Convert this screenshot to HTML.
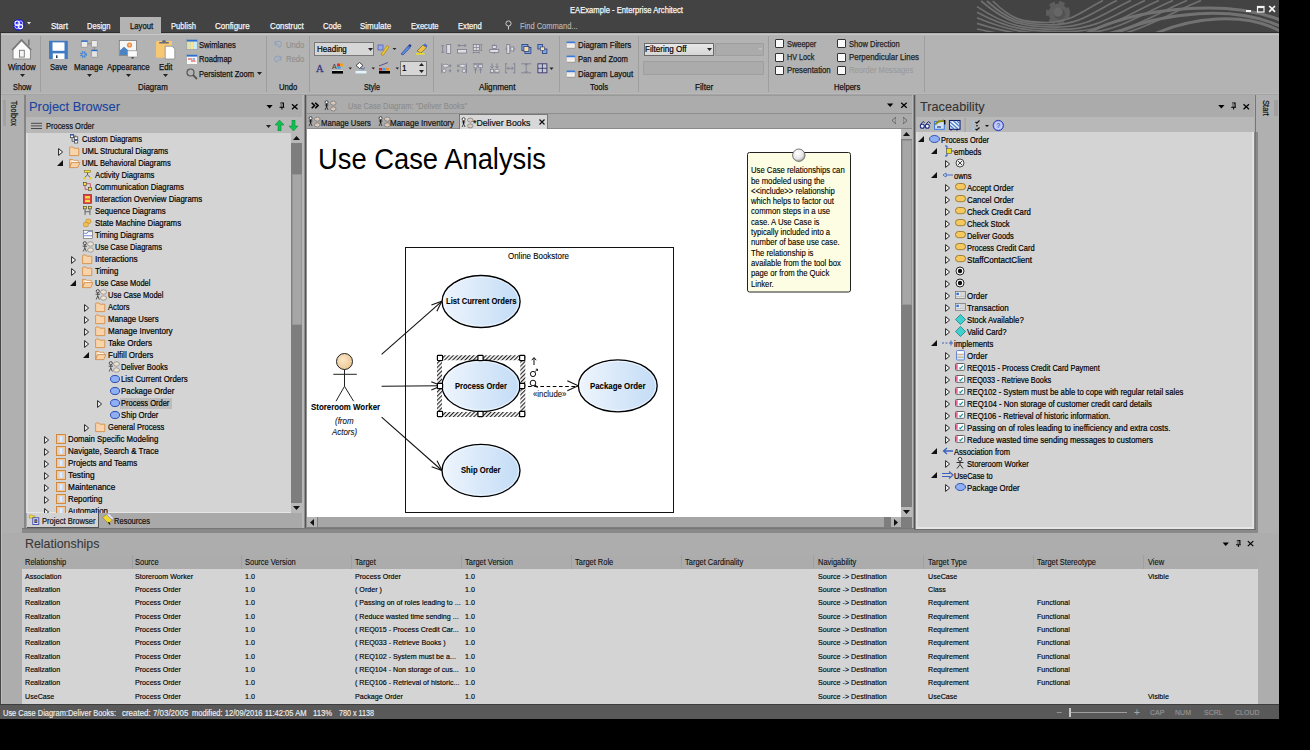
<!DOCTYPE html>
<html><head><meta charset="utf-8"><style>
html,body{margin:0;padding:0;}
body{width:1310px;height:750px;background:#000;position:relative;overflow:hidden;font-family:"Liberation Sans",sans-serif;}
div,svg{position:absolute;}
.t{white-space:nowrap;}
</style></head><body>
<div style="left:0px;top:0px;width:1279px;height:33px;background:#434343;"></div>
<svg style="left:0px;top:0px;" width="1310" height="40" viewBox="0 0 1310 40"><defs><clipPath id="tbc"><rect x="960" y="0" width="319" height="32"/></clipPath></defs><g clip-path="url(#tbc)"><circle cx="1058" cy="13" r="9.5" fill="#5e5e5e"/><circle cx="1058" cy="13" r="10.5" fill="none" stroke="#5e5e5e" stroke-width="3" stroke-dasharray="6,4"/><circle cx="1059.5" cy="14" r="5.8" fill="#525252"/><circle cx="1058" cy="12" r="4.5" fill="#666"/><path d="M992.7,1.0 C1011.4,19.3 1022.0,22.5 1046.0,22.5 C1071.7,22.5 1083.0,10.4 1103.0,0.5" stroke="#707070" stroke-width="1.7" fill="none"/><path d="M986.9,1.0 C1009.3,21.2 1022.2,24.8 1051.0,24.8 C1080.7,24.8 1093.9,11.4 1117.0,0.5" stroke="#707070" stroke-width="1.7" fill="none"/><path d="M981.1,1.0 C1007.3,23.2 1022.3,27.1 1056.0,27.1 C1089.8,27.1 1104.8,12.5 1131.0,0.5" stroke="#707070" stroke-width="1.7" fill="none"/><path d="M977.0,6.6 C1006.4,26.0 1023.2,29.4 1061.0,29.4 C1098.8,29.4 1115.6,13.5 1145.0,0.5" stroke="#707070" stroke-width="1.7" fill="none"/><path d="M977.0,12.2 C1008.1,28.8 1026.0,31.7 1066.0,31.7 C1107.8,31.7 1126.5,14.5 1159.0,0.5" stroke="#707070" stroke-width="1.7" fill="none"/><path d="M977.0,17.8 C1009.9,31.6 1028.7,34.0 1071.0,34.0 C1116.9,34.0 1137.3,15.6 1173.0,0.5" stroke="#707070" stroke-width="1.7" fill="none"/><path d="M977.0,23.4 C1011.6,34.4 1031.5,36.3 1076.0,36.3 C1126.0,36.3 1148.2,16.6 1187.0,0.5" stroke="#707070" stroke-width="1.7" fill="none"/><path d="M977.0,29.0 C1013.4,37.2 1034.2,38.6 1081.0,38.6 C1135.0,38.6 1159.0,17.6 1201.0,0.5" stroke="#707070" stroke-width="1.7" fill="none"/><path d="M1085,34 C1140,6 1232,-1 1282,21" stroke="#727272" stroke-width="3" fill="none"/><path d="M1112,35 C1162,11 1236,5 1282,27" stroke="#727272" stroke-width="3" fill="none"/><path d="M1150,36 C1190,17 1245,11 1282,32" stroke="#727272" stroke-width="3" fill="none"/></g></svg>
<div class="t" style="left:569.50px;top:5.68px;font-size:9px;line-height:9px;color:#f8f8f8;font-weight:normal;-webkit-text-stroke:0.25px #f8f8f8;transform:scaleX(0.8486);transform-origin:0 0;">EAExample - Enterprise Architect</div>
<div style="left:1245.5px;top:9.8px;width:5px;height:1.8px;background:#f4f4f4;"></div>
<svg style="left:0px;top:0px;" width="1310" height="40" viewBox="0 0 1310 40"><rect x="1257.5" y="6.5" width="6.5" height="5.5" fill="none" stroke="#f4f4f4" stroke-width="1.2"/><rect x="1257.5" y="6.5" width="6.5" height="1.6" fill="#f4f4f4"/><path d="M1269.2,6 L1275,11.8 M1275,6 L1269.2,11.8" stroke="#f6f6f6" stroke-width="1.7"/></svg>
<div style="left:120px;top:17px;width:41px;height:16px;background:#b3b3b3;"></div>
<svg style="left:13px;top:18.5px;" width="12" height="12" viewBox="0 0 12 12"><circle cx="5.8" cy="5.8" r="5.6" fill="#2a2af0" stroke="#1a1a90" stroke-width="0.5"/><circle cx="4.2" cy="4.2" r="2.2" fill="none" stroke="#fff" stroke-width="1.1"/><circle cx="7.4" cy="7.4" r="2.2" fill="none" stroke="#fff" stroke-width="1.1"/><circle cx="7.4" cy="4.2" r="2.2" fill="none" stroke="#e8e8ff" stroke-width="0.8"/><circle cx="4.2" cy="7.4" r="2.2" fill="none" stroke="#e8e8ff" stroke-width="0.8"/></svg>
<svg style="left:26.5px;top:22.3px;" width="4" height="3" viewBox="0 0 4 3"><path d="M0,0 H4 L2,2.5 Z" fill="#e8e8e8"/></svg>
<div class="t" style="left:51.00px;top:22.28px;font-size:9px;line-height:9px;color:#f6f6f6;font-weight:normal;-webkit-text-stroke:0.25px #f6f6f6;transform:scaleX(0.8945);transform-origin:0 0;">Start</div>
<div class="t" style="left:86.50px;top:22.28px;font-size:9px;line-height:9px;color:#f6f6f6;font-weight:normal;-webkit-text-stroke:0.25px #f6f6f6;transform:scaleX(0.8389);transform-origin:0 0;">Design</div>
<div class="t" style="left:129.50px;top:22.28px;font-size:9px;line-height:9px;color:#111;font-weight:normal;-webkit-text-stroke:0.25px #111;transform:scaleX(0.8549);transform-origin:0 0;">Layout</div>
<div class="t" style="left:171.00px;top:22.28px;font-size:9px;line-height:9px;color:#f6f6f6;font-weight:normal;-webkit-text-stroke:0.25px #f6f6f6;transform:scaleX(0.8470);transform-origin:0 0;">Publish</div>
<div class="t" style="left:215.20px;top:22.28px;font-size:9px;line-height:9px;color:#f6f6f6;font-weight:normal;-webkit-text-stroke:0.25px #f6f6f6;transform:scaleX(0.8867);transform-origin:0 0;">Configure</div>
<div class="t" style="left:269.70px;top:22.28px;font-size:9px;line-height:9px;color:#f6f6f6;font-weight:normal;-webkit-text-stroke:0.25px #f6f6f6;transform:scaleX(0.8725);transform-origin:0 0;">Construct</div>
<div class="t" style="left:322.50px;top:22.28px;font-size:9px;line-height:9px;color:#f6f6f6;font-weight:normal;-webkit-text-stroke:0.25px #f6f6f6;transform:scaleX(0.8506);transform-origin:0 0;">Code</div>
<div class="t" style="left:359.80px;top:22.28px;font-size:9px;line-height:9px;color:#f6f6f6;font-weight:normal;-webkit-text-stroke:0.25px #f6f6f6;transform:scaleX(0.8882);transform-origin:0 0;">Simulate</div>
<div class="t" style="left:410.90px;top:22.28px;font-size:9px;line-height:9px;color:#f6f6f6;font-weight:normal;-webkit-text-stroke:0.25px #f6f6f6;transform:scaleX(0.8457);transform-origin:0 0;">Execute</div>
<div class="t" style="left:458.00px;top:22.28px;font-size:9px;line-height:9px;color:#f6f6f6;font-weight:normal;-webkit-text-stroke:0.25px #f6f6f6;transform:scaleX(0.8495);transform-origin:0 0;">Extend</div>
<svg style="left:505px;top:20px;" width="7" height="10" viewBox="0 0 7 10"><circle cx="3.5" cy="3.5" r="2.6" stroke="#ccc" stroke-width="1" fill="none"/><path d="M3.5,6 V9.5" stroke="#ccc"/></svg>
<div class="t" style="left:520.00px;top:22.28px;font-size:9px;line-height:9px;color:#bdbdbd;font-weight:normal;-webkit-text-stroke:0.1px #bdbdbd;transform:scaleX(0.8345);transform-origin:0 0;">Find Command...</div>
<div style="left:0px;top:33px;width:1279px;height:62px;background:#b3b3b3;"></div>
<div style="left:0px;top:32px;width:1279px;height:1px;background:#2e2e2e;"></div>
<div style="left:120px;top:32px;width:41px;height:1px;background:#b3b3b3;"></div>
<div style="left:1px;top:33.5px;width:1278px;height:1px;background:#c6c6c6;"></div>
<div style="left:0px;top:93px;width:1279px;height:1px;background:#b9b9b9;"></div>
<div style="left:0px;top:94px;width:1279px;height:1px;background:#a4a4a4;"></div>
<div style="left:40px;top:36px;width:1px;height:56px;background:#9e9e9e;"></div>
<div style="left:266px;top:36px;width:1px;height:56px;background:#9e9e9e;"></div>
<div style="left:309px;top:36px;width:1px;height:56px;background:#9e9e9e;"></div>
<div style="left:433px;top:36px;width:1px;height:56px;background:#9e9e9e;"></div>
<div style="left:559px;top:36px;width:1px;height:56px;background:#9e9e9e;"></div>
<div style="left:638px;top:36px;width:1px;height:56px;background:#9e9e9e;"></div>
<div style="left:768px;top:36px;width:1px;height:56px;background:#9e9e9e;"></div>
<div style="left:924px;top:36px;width:1px;height:56px;background:#9e9e9e;"></div>
<div class="t" style="left:12.70px;top:83.48px;font-size:9px;line-height:9px;color:#111;font-weight:normal;-webkit-text-stroke:0.25px #111;transform:scaleX(0.8129);transform-origin:0 0;">Show</div>
<div class="t" style="left:138.20px;top:83.48px;font-size:9px;line-height:9px;color:#111;font-weight:normal;-webkit-text-stroke:0.25px #111;transform:scaleX(0.8763);transform-origin:0 0;">Diagram</div>
<div class="t" style="left:278.60px;top:83.48px;font-size:9px;line-height:9px;color:#111;font-weight:normal;-webkit-text-stroke:0.25px #111;transform:scaleX(0.8552);transform-origin:0 0;">Undo</div>
<div class="t" style="left:363.50px;top:83.48px;font-size:9px;line-height:9px;color:#111;font-weight:normal;-webkit-text-stroke:0.25px #111;transform:scaleX(0.7947);transform-origin:0 0;">Style</div>
<div class="t" style="left:478.50px;top:83.48px;font-size:9px;line-height:9px;color:#111;font-weight:normal;-webkit-text-stroke:0.25px #111;transform:scaleX(0.9096);transform-origin:0 0;">Alignment</div>
<div class="t" style="left:590.10px;top:83.48px;font-size:9px;line-height:9px;color:#111;font-weight:normal;-webkit-text-stroke:0.25px #111;transform:scaleX(0.8663);transform-origin:0 0;">Tools</div>
<div class="t" style="left:694.70px;top:83.48px;font-size:9px;line-height:9px;color:#111;font-weight:normal;-webkit-text-stroke:0.25px #111;transform:scaleX(0.9101);transform-origin:0 0;">Filter</div>
<div class="t" style="left:833.80px;top:83.48px;font-size:9px;line-height:9px;color:#111;font-weight:normal;-webkit-text-stroke:0.25px #111;transform:scaleX(0.8449);transform-origin:0 0;">Helpers</div>
<div class="t" style="left:8.40px;top:62.78px;font-size:9px;line-height:9px;color:#111;font-weight:normal;-webkit-text-stroke:0.25px #111;transform:scaleX(0.8623);transform-origin:0 0;">Window</div>
<svg style="left:20px;top:74px;" width="5" height="3" viewBox="0 0 5 3"><path d="M0,0 H5 L2.5,3 Z" fill="#222"/></svg>
<div class="t" style="left:49.50px;top:62.78px;font-size:9px;line-height:9px;color:#111;font-weight:normal;-webkit-text-stroke:0.25px #111;transform:scaleX(0.8434);transform-origin:0 0;">Save</div>
<div class="t" style="left:73.70px;top:62.78px;font-size:9px;line-height:9px;color:#111;font-weight:normal;-webkit-text-stroke:0.25px #111;transform:scaleX(0.8887);transform-origin:0 0;">Manage</div>
<svg style="left:86.5px;top:74px;" width="5" height="3" viewBox="0 0 5 3"><path d="M0,0 H5 L2.5,3 Z" fill="#222"/></svg>
<div class="t" style="left:106.60px;top:62.78px;font-size:9px;line-height:9px;color:#111;font-weight:normal;-webkit-text-stroke:0.25px #111;transform:scaleX(0.8798);transform-origin:0 0;">Appearance</div>
<svg style="left:126px;top:74px;" width="5" height="3" viewBox="0 0 5 3"><path d="M0,0 H5 L2.5,3 Z" fill="#222"/></svg>
<div class="t" style="left:158.80px;top:62.78px;font-size:9px;line-height:9px;color:#111;font-weight:normal;-webkit-text-stroke:0.25px #111;transform:scaleX(0.8641);transform-origin:0 0;">Edit</div>
<svg style="left:163px;top:74px;" width="5" height="3" viewBox="0 0 5 3"><path d="M0,0 H5 L2.5,3 Z" fill="#222"/></svg>
<svg style="left:0px;top:0px;" width="1310" height="100" viewBox="0 0 1310 100"><path d="M13,59 V49.5 L21.5,40.5 L30.5,49.5 V59 Z" fill="#fbfbfb" stroke="#8a8a8a" stroke-width="1.1" stroke-linejoin="round"/><path d="M12,50 L21.5,39.8 L31.3,50" stroke="#787878" stroke-width="1.4" fill="none"/><rect x="28" y="39.5" width="1.6" height="6" fill="#7a7a7a"/><rect x="19.5" y="50.3" width="4.8" height="6.8" fill="#f4f4f4" stroke="#777" stroke-width="0.9"/></svg>
<svg style="left:0px;top:0px;" width="1310" height="100" viewBox="0 0 1310 100"><rect x="49" y="40.8" width="18.8" height="18.2" fill="#3f7bc4"/><rect x="52.5" y="42.4" width="12" height="8.4" fill="#fff"/><rect x="52.8" y="53.4" width="11.7" height="5.6" fill="#fff"/><rect x="56" y="55.3" width="1.5" height="2.8" fill="#2a3a4a"/></svg>
<svg style="left:0px;top:0px;" width="1310" height="100" viewBox="0 0 1310 100"><rect x="81.3" y="40.5" width="6.3" height="6.8" rx="0.6" fill="#eaeaea" stroke="#8a8a8a" stroke-width="0.7"/><rect x="81.3" y="40.5" width="6.3" height="1.4" fill="#2a6ed0"/><rect x="91.4" y="40.5" width="6" height="6.5" rx="0.6" fill="#eaeaea" stroke="#8a8a8a" stroke-width="0.7"/><rect x="91.4" y="49.8" width="6" height="7.5" rx="0.6" fill="#e4e4e4" stroke="#8a8a8a" stroke-width="0.7"/><rect x="91.4" y="49.8" width="6" height="1.4" fill="#2a6ed0"/><path d="M87.6,43.8 H91.4 M94.4,47 V49.8" stroke="#777" stroke-width="0.7"/><circle cx="83.5" cy="54.5" r="2.6" fill="none" stroke="#3a80d0" stroke-width="1.6" stroke-dasharray="1.2,0.9"/><circle cx="83.5" cy="54.5" r="1.6" fill="none" stroke="#3a80d0" stroke-width="0.8"/></svg>
<svg style="left:0px;top:0px;" width="1310" height="100" viewBox="0 0 1310 100"><rect x="119.3" y="40.4" width="17.2" height="15" fill="#f6f6f6" stroke="#7a7a7a" stroke-width="0.8"/><path d="M119.7,55 V50.5 L124,46.8 L128.5,50.5 V55 Z" fill="#4a84c4"/><circle cx="129.5" cy="45" r="2.6" fill="#f08a40"/><path d="M128.2,45 H130.8 M129.5,43.7 V46.3" stroke="#fff" stroke-width="0.5"/><rect x="127.6" y="50.7" width="9.8" height="6.3" rx="0.6" fill="#fafafa" stroke="#8a8a8a" stroke-width="0.7"/><rect x="131.6" y="57" width="2" height="1.6" fill="#444"/></svg>
<svg style="left:0px;top:0px;" width="1310" height="100" viewBox="0 0 1310 100"><rect x="156" y="41" width="16" height="16.8" rx="1" fill="#f6c874"/><path d="M159.2,43.6 H168.8 V42 H166 A2,2 0 0 0 162,42 H159.2 Z" fill="#6a6a7a"/><path d="M165.2,46.2 H172 L174.8,49 V59 H165.2 Z" fill="#fff" stroke="#8a8a8a" stroke-width="0.8" stroke-linejoin="round"/></svg>
<svg style="left:186px;top:38.5px;" width="12" height="11" viewBox="0 0 12 11"><rect x="0.5" y="0.5" width="11" height="10" fill="#d0d0d0" stroke="#9a9a9a" stroke-width="0.6"/><rect x="0.8" y="0.8" width="10.4" height="1.8" fill="#2a6ed0"/><rect x="1.3" y="2.8" width="2.8" height="7.2" fill="#d4e8a8"/><rect x="4.6" y="2.8" width="2.8" height="7.2" fill="#ffe290"/><rect x="7.9" y="2.8" width="2.8" height="7.2" fill="#bff0ff"/></svg>
<svg style="left:186px;top:53.5px;" width="12" height="11" viewBox="0 0 12 11"><rect x="0.5" y="0.5" width="11" height="10" fill="#f8f8f8" stroke="#9a9a9a" stroke-width="0.6"/><rect x="0.8" y="0.8" width="10.4" height="1.8" fill="#2a6ed0"/><path d="M2,5 H6 M5,7 H9.5" stroke="#e03030" stroke-width="1.1"/><path d="M6.5,5 H9" stroke="#3a6ad0" stroke-width="1"/></svg>
<svg style="left:186px;top:68px;" width="12" height="12" viewBox="0 0 12 12"><circle cx="4.5" cy="4.5" r="3.5" stroke="#555" stroke-width="1.2" fill="none"/><path d="M7,7 L11,11" stroke="#555" stroke-width="1.8"/></svg>
<div class="t" style="left:199.40px;top:40.88px;font-size:9px;line-height:9px;color:#111;font-weight:normal;-webkit-text-stroke:0.25px #111;transform:scaleX(0.8457);transform-origin:0 0;">Swimlanes</div>
<div class="t" style="left:199.40px;top:55.38px;font-size:9px;line-height:9px;color:#111;font-weight:normal;-webkit-text-stroke:0.25px #111;transform:scaleX(0.8406);transform-origin:0 0;">Roadmap</div>
<div class="t" style="left:199.40px;top:69.98px;font-size:9px;line-height:9px;color:#111;font-weight:normal;-webkit-text-stroke:0.25px #111;transform:scaleX(0.8395);transform-origin:0 0;">Persistent Zoom</div>
<svg style="left:257px;top:72px;" width="5" height="3" viewBox="0 0 5 3"><path d="M0,0 H5 L2.5,3 Z" fill="#222"/></svg>
<svg style="left:274px;top:40px;" width="8" height="8" viewBox="0 0 8 8"><path d="M1,1 V5 H5 M1.5,4.5 A3,3 0 1 1 4,7" stroke="#8aa0c0" fill="none"/></svg>
<svg style="left:274px;top:55px;" width="8" height="8" viewBox="0 0 8 8"><path d="M7,1 V5 H3 M6.5,4.5 A3,3 0 1 0 4,7" stroke="#8aa0c0" fill="none"/></svg>
<div class="t" style="left:285.60px;top:40.78px;font-size:9px;line-height:9px;color:#8e8e8e;font-weight:normal;-webkit-text-stroke:0.1px #8e8e8e;transform:scaleX(0.8552);transform-origin:0 0;">Undo</div>
<div class="t" style="left:285.60px;top:55.38px;font-size:9px;line-height:9px;color:#8e8e8e;font-weight:normal;-webkit-text-stroke:0.1px #8e8e8e;transform:scaleX(0.8552);transform-origin:0 0;">Redo</div>
<div style="left:314px;top:42px;width:60px;height:14px;background:#d6d6d6;border:1px solid #7a7a7a;box-sizing:border-box"></div>
<div class="t" style="left:316.50px;top:45.28px;font-size:9px;line-height:9px;color:#000;font-weight:normal;-webkit-text-stroke:0.2px #000;transform:scaleX(0.8889);transform-origin:0 0;">Heading</div>
<svg style="left:368px;top:48px;" width="5" height="3" viewBox="0 0 5 3"><path d="M0,0 H5 L2.5,3 Z" fill="#222"/></svg>
<div style="left:400px;top:61px;width:27px;height:15px;background:#d6d6d6;border:1px solid #7a7a7a;box-sizing:border-box"></div>
<div class="t" style="left:402.00px;top:64.48px;font-size:9px;line-height:9px;color:#000;font-weight:normal;-webkit-text-stroke:0.2px #000;transform:scaleX(0.9000);transform-origin:0 0;">1</div>
<svg style="left:419px;top:63px;" width="5" height="10" viewBox="0 0 5 10"><path d="M0,3 L2.5,0 L5,3 Z M0,7 H5 L2.5,10 Z" fill="#222"/></svg>
<svg style="left:0px;top:0px;" width="1310" height="100" viewBox="0 0 1310 100"><rect x="378" y="45" width="5" height="5" fill="#9aa8e8" stroke="#4a5ab0" stroke-width="0.7"/><path d="M381,54.5 L387,45.5 L389,47 L383,55.5 Z" fill="#f0c830" stroke="#9a7a10" stroke-width="0.6"/><path d="M392.5,48 H396.5 L394.5,50 Z" fill="#222"/><path d="M401,54 L408,46 L410,48 L403,55 Z" fill="#5a8ae0" stroke="#2a3a90" stroke-width="0.6"/><path d="M408,45.5 L410,44 L411.5,45.5 L410.5,47.5 Z" fill="#2a3a90"/><path d="M417,51 L423,45 L426.5,47.5 L421,53 Z" fill="#f0c040" stroke="#6a5a20" stroke-width="0.6"/><path d="M423,45 L425,43.5 L427.5,45.5 L426.5,47.5 Z" fill="#4a6ad0"/><rect x="416" y="53" width="8.5" height="1.6" fill="#e8e020"/></svg>
<svg style="left:0px;top:0px;" width="1310" height="100" viewBox="0 0 1310 100"><text x="316" y="71.8" font-family="Liberation Serif" font-size="10.5" fill="#3a3a80" stroke="#3a3a80" stroke-width="0.3">A</text><text x="332" y="69" font-family="Liberation Sans" font-size="7" fill="#333">A</text><rect x="337" y="63.5" width="3" height="3" fill="#e83030"/><rect x="340" y="63.5" width="3" height="3" fill="#f0a020"/><rect x="337.5" y="66.3" width="3" height="2.5" fill="#30a0f0"/><rect x="332" y="71" width="11" height="2.6" fill="#000"/><rect x="332" y="70.3" width="11" height="0.7" fill="#e8e8e8"/><path d="M348.5,67.5 H352 L350.25,69.5 Z M371.5,67.5 H375 L373.25,69.5 Z M395.5,67.5 H399 L397.25,69.5 Z" fill="#222"/><path d="M356,65.5 L359.5,62.5 L363,65.5 L359.5,68.5 Z" fill="#fff" stroke="#222" stroke-width="0.8"/><path d="M360.5,68.5 Q364,70 365,67.5" stroke="#3a5ab0" stroke-width="0.9" fill="none"/><rect x="355.5" y="71" width="11" height="2.4" fill="#e4f4fc"/><path d="M379,66 L388,62.5" stroke="#3a3a90" stroke-width="0.8"/><rect x="379" y="68" width="3.2" height="2.6" fill="#e82020"/><rect x="382.5" y="68" width="3.2" height="2.6" fill="#40a0f0"/><rect x="386" y="68" width="3.2" height="2.6" fill="#f09020"/><rect x="379" y="71" width="11" height="2.6" fill="#000"/></svg>
<svg style="left:0px;top:0px;" width="1310" height="100" viewBox="0 0 1310 100"><g transform="translate(441.2,44)"><path d="M1.5,1 V9 M0,2.5 L1.5,1 L3,2.5 M0,7.5 L1.5,9 L3,7.5" stroke="#7a7a90" fill="none" stroke-width="0.8"/><rect x="5.5" y="0.5" width="4" height="9" fill="#dedede" stroke="#7a7a90" stroke-width="0.8"/></g><g transform="translate(457,44)"><path d="M1,1.5 H9 M2.5,0 L1,1.5 L2.5,3 M7.5,0 L9,1.5 L7.5,3" stroke="#7a7a90" fill="none" stroke-width="0.8"/><rect x="0.5" y="5.5" width="9" height="3.5" fill="#dedede" stroke="#7a7a90" stroke-width="0.8"/></g><g transform="translate(472.8,44)"><rect x="0.5" y="0.5" width="6" height="6" fill="#dedede" stroke="#7a7a90" stroke-width="0.8"/><path d="M3.5,0.5 V6.5 M0.5,3.5 H6.5 M8.5,0.5 V6.5 M7.5,0.5 H9.5 M7.5,6.5 H9.5 M0.5,8.5 H6.5 M0.5,7.5 V9.5 M6.5,7.5 V9.5" stroke="#7a7a90" fill="none" stroke-width="0.7"/></g><g transform="translate(489.3,44)"><rect x="3" y="1.5" width="4" height="3" fill="#dedede" stroke="#7a7a90" stroke-width="0.8"/><rect x="0.5" y="5.5" width="9" height="3" fill="#dedede" stroke="#7a7a90" stroke-width="0.8"/><path d="M5,0 V1.5 M5,8.5 V10" stroke="#7a7a90" stroke-width="0.8"/></g><g transform="translate(505.3,44)"><rect x="1.5" y="0.5" width="3" height="9" fill="#dedede" stroke="#7a7a90" stroke-width="0.8"/><rect x="5.5" y="3" width="3" height="4" fill="#dedede" stroke="#7a7a90" stroke-width="0.8"/><path d="M0,5 H1.5 M8.5,5 H10" stroke="#7a7a90" stroke-width="0.8"/></g><g transform="translate(521.4,44)"><rect x="0.5" y="0.5" width="6" height="6" fill="#7aaae0" stroke="#2a3a80" stroke-width="0.8"/><rect x="3.5" y="3.5" width="6" height="6" fill="#7aaae0" stroke="#2a3a80" stroke-width="0.8"/><rect x="2.5" y="2.5" width="5" height="5" fill="#f6dca0" stroke="#2a3a80" stroke-width="0.8"/></g><g transform="translate(537.4,44)"><rect x="0.5" y="0.5" width="4.5" height="4.5" fill="#7aaae0" stroke="#2a3a80" stroke-width="0.8"/><rect x="5" y="5" width="4.5" height="4.5" fill="#7aaae0" stroke="#2a3a80" stroke-width="0.8"/><rect x="3" y="3" width="4" height="3.5" fill="#f6e8a0" stroke="#2a3a80" stroke-width="0.6"/></g><g transform="translate(441.2,63.3)"><path d="M0.5,0 V10 M9,1 V4 M9,6 V9 M7.5,2.5 H10 M7.5,7.5 H10" stroke="#7a7a90" stroke-width="0.8" fill="none"/><ellipse cx="4.5" cy="2.5" rx="3" ry="1.6" fill="#dedede" stroke="#7a7a90" stroke-width="0.7"/><ellipse cx="3" cy="7.5" rx="1.8" ry="1.8" fill="#dedede" stroke="#7a7a90" stroke-width="0.7"/></g><g transform="translate(457,63.3)"><path d="M9.5,0 V10 M1,1 V4 M1,6 V9 M0,2.5 H2.5 M0,7.5 H2.5" stroke="#7a7a90" stroke-width="0.8" fill="none"/><ellipse cx="5.5" cy="2.5" rx="3" ry="1.6" fill="#dedede" stroke="#7a7a90" stroke-width="0.7"/><ellipse cx="7" cy="7.5" rx="1.8" ry="1.8" fill="#dedede" stroke="#7a7a90" stroke-width="0.7"/></g><g transform="translate(473,63.3)"><path d="M0,0.5 H10 M2.5,5 V10 M7.5,5 V10 M1,7 L2.5,5.5 L4,7 M6,7 L7.5,5.5 L9,7" stroke="#7a7a90" stroke-width="0.8" fill="none"/><rect x="1" y="1.5" width="3" height="3" fill="#dedede" stroke="#7a7a90" stroke-width="0.7"/><rect x="5.5" y="1.5" width="4" height="2.5" fill="#dedede" stroke="#7a7a90" stroke-width="0.7"/></g><g transform="translate(489.5,63.3)"><path d="M0,9.5 H10 M2.5,0 V5 M7.5,0 V5 M1,3 L2.5,4.5 L4,3 M6,3 L7.5,4.5 L9,3" stroke="#7a7a90" stroke-width="0.8" fill="none"/><rect x="1" y="6" width="3" height="3" fill="#dedede" stroke="#7a7a90" stroke-width="0.7"/><ellipse cx="7.5" cy="7.5" rx="2.5" ry="1.5" fill="#dedede" stroke="#7a7a90" stroke-width="0.7"/></g><g transform="translate(505.2,63.3)"><path d="M0.5,0 V10 M9.5,0 V10 M0.5,0.5 H2 M0.5,9.5 H2 M9.5,0.5 H8 M9.5,9.5 H8 M2,5 H8 M3.5,3.5 L2,5 L3.5,6.5 M6.5,3.5 L8,5 L6.5,6.5" stroke="#7a7a90" stroke-width="0.8" fill="none"/></g><g transform="translate(521.2,63.3)"><path d="M0,0.5 H10 M0,9.5 H10 M5,0.5 V9.5 M3.5,2 L5,0.5 L6.5,2 M3.5,8 L5,9.5 L6.5,8" stroke="#7a7a90" stroke-width="0.8" fill="none"/></g><g transform="translate(537.4,63.3)"><rect x="0.5" y="0.5" width="9" height="9" fill="#c8c8d0" stroke="#3a3a70" stroke-width="0.9"/><path d="M5,0.5 V9.5 M0.5,5 H9.5" stroke="#3a3a70" stroke-width="0.9"/></g><path d="M549.5,67.5 H553.5 L551.5,70 Z" fill="#222"/></svg>
<svg style="left:566px;top:40.599999999999994px;" width="10" height="8" viewBox="0 0 10 8"><rect x="1" y="1" width="8.5" height="6.8" rx="0.8" fill="#8a8a8a" opacity="0.6"/><rect x="0.5" y="0.5" width="8.5" height="6.5" rx="0.8" fill="#f6f2ee" stroke="#a0a0a0" stroke-width="0.5"/><rect x="0.5" y="0.5" width="8.5" height="1.8" rx="0.5" fill="#3a7ad8"/><path d="M1,4 H9" stroke="#e0d8d0" stroke-width="0.6"/></svg>
<div class="t" style="left:577.90px;top:40.78px;font-size:9px;line-height:9px;color:#111;font-weight:normal;-webkit-text-stroke:0.25px #111;transform:scaleX(0.8720);transform-origin:0 0;">Diagram Filters</div>
<svg style="left:566px;top:55.099999999999994px;" width="10" height="8" viewBox="0 0 10 8"><rect x="1" y="1" width="8.5" height="6.8" rx="0.8" fill="#8a8a8a" opacity="0.6"/><rect x="0.5" y="0.5" width="8.5" height="6.5" rx="0.8" fill="#f6f2ee" stroke="#a0a0a0" stroke-width="0.5"/><rect x="0.5" y="0.5" width="8.5" height="1.8" rx="0.5" fill="#3a7ad8"/><path d="M1,4 H9" stroke="#e0d8d0" stroke-width="0.6"/></svg>
<div class="t" style="left:577.90px;top:55.28px;font-size:9px;line-height:9px;color:#111;font-weight:normal;-webkit-text-stroke:0.25px #111;transform:scaleX(0.8453);transform-origin:0 0;">Pan and Zoom</div>
<svg style="left:566px;top:69.8px;" width="10" height="8" viewBox="0 0 10 8"><rect x="1" y="1" width="8.5" height="6.8" rx="0.8" fill="#8a8a8a" opacity="0.6"/><rect x="0.5" y="0.5" width="8.5" height="6.5" rx="0.8" fill="#f6f2ee" stroke="#a0a0a0" stroke-width="0.5"/><rect x="0.5" y="0.5" width="8.5" height="1.8" rx="0.5" fill="#3a7ad8"/><path d="M1,4 H9" stroke="#e0d8d0" stroke-width="0.6"/></svg>
<div class="t" style="left:577.90px;top:69.98px;font-size:9px;line-height:9px;color:#111;font-weight:normal;-webkit-text-stroke:0.25px #111;transform:scaleX(0.8673);transform-origin:0 0;">Diagram Layout</div>
<div style="left:643.5px;top:42.5px;width:70px;height:13.5px;background:linear-gradient(#e8e8e8,#d6d6d6);border:1px solid #6a6a6a;box-sizing:border-box"></div>
<div class="t" style="left:645.40px;top:45.18px;font-size:9px;line-height:9px;color:#000;font-weight:normal;-webkit-text-stroke:0.2px #000;transform:scaleX(0.8976);transform-origin:0 0;">Filtering Off</div>
<svg style="left:707px;top:48px;" width="5" height="3" viewBox="0 0 5 3"><path d="M0,0 H5 L2.5,3 Z" fill="#222"/></svg>
<div style="left:715px;top:42.5px;width:49px;height:13.5px;background:#ababab;border:1px solid #9e9e9e;box-sizing:border-box;border-radius:1px"></div>
<div style="left:643px;top:61px;width:121px;height:14px;background:#ababab;border:1px solid #9e9e9e;box-sizing:border-box;border-radius:1px"></div>
<svg style="left:758px;top:48px;" width="5" height="3" viewBox="0 0 5 3"><path d="M0,0 H4.5 L2.25,2.5 Z" fill="#c0c0c0"/></svg>
<div style="left:775px;top:39.300000000000004px;width:9px;height:9px;background:#fafafa;border:1px solid #333;box-sizing:border-box;border-radius:1px"></div>
<div class="t" style="left:787.00px;top:40.08px;font-size:9px;line-height:9px;color:#222;font-weight:normal;-webkit-text-stroke:0.25px #222;transform:scaleX(0.8249);transform-origin:0 0;">Sweeper</div>
<div style="left:775px;top:52.7px;width:9px;height:9px;background:#fafafa;border:1px solid #333;box-sizing:border-box;border-radius:1px"></div>
<div class="t" style="left:787.00px;top:53.48px;font-size:9px;line-height:9px;color:#222;font-weight:normal;-webkit-text-stroke:0.25px #222;transform:scaleX(0.8026);transform-origin:0 0;">HV Lock</div>
<div style="left:775px;top:65.7px;width:9px;height:9px;background:#fafafa;border:1px solid #333;box-sizing:border-box;border-radius:1px"></div>
<div class="t" style="left:787.00px;top:66.48px;font-size:9px;line-height:9px;color:#222;font-weight:normal;-webkit-text-stroke:0.25px #222;transform:scaleX(0.8648);transform-origin:0 0;">Presentation</div>
<div style="left:837px;top:39.300000000000004px;width:9px;height:9px;background:#fafafa;border:1px solid #333;box-sizing:border-box;border-radius:1px"></div>
<div class="t" style="left:849.00px;top:40.08px;font-size:9px;line-height:9px;color:#222;font-weight:normal;-webkit-text-stroke:0.25px #222;transform:scaleX(0.8377);transform-origin:0 0;">Show Direction</div>
<div style="left:837px;top:52.7px;width:9px;height:9px;background:#fafafa;border:1px solid #333;box-sizing:border-box;border-radius:1px"></div>
<div class="t" style="left:849.00px;top:53.48px;font-size:9px;line-height:9px;color:#222;font-weight:normal;-webkit-text-stroke:0.25px #222;transform:scaleX(0.8800);transform-origin:0 0;">Perpendicular Lines</div>
<div style="left:837px;top:65.7px;width:9px;height:9px;background:#fafafa;border:1px solid #333;box-sizing:border-box;border-radius:1px"></div>
<div class="t" style="left:849.00px;top:66.48px;font-size:9px;line-height:9px;color:#999;font-weight:normal;-webkit-text-stroke:0.05px #999;transform:scaleX(0.8444);transform-origin:0 0;">Reorder Messages</div>
<div style="left:0px;top:95px;width:1279px;height:609px;background:#b0b0b0;"></div>
<div style="left:0px;top:33px;width:1px;height:686px;background:#474747;"></div>
<div style="left:1px;top:95px;width:1px;height:609px;background:#bcbcbc;"></div>
<div style="left:2.5px;top:100px;width:3.5px;height:26px;background:#a2a2a2;"></div>
<svg style="left:0px;top:95px;overflow:visible" width="24" height="40" viewBox="0 0 24 40"><text transform="translate(10.6,5.8) rotate(90)" font-family="Liberation Sans" font-size="9" textLength="25" lengthAdjust="spacingAndGlyphs" fill="#111" stroke="#111" stroke-width="0.2">Toolbox</text></svg>
<div style="left:24px;top:95px;width:2px;height:434px;background:#858585;"></div>
<div style="left:26px;top:95px;width:276px;height:22px;background:#ababab;"></div>
<div class="t" style="left:29.40px;top:99.82px;font-size:13.5px;line-height:13.5px;color:#1844a0;font-weight:normal;-webkit-text-stroke:0.1px #1844a0;transform:scaleX(0.9551);transform-origin:0 0;">Project Browser</div>
<svg style="left:0px;top:0px;" width="1310" height="750" viewBox="0 0 1310 750"><path d="M266.4,105 H272.7 L269.54999999999995,108.5 Z" fill="#000"/></svg>
<svg style="left:0px;top:0px;" width="1310" height="750" viewBox="0 0 1310 750"><path d="M280.4,103.1 H283.4 V107.1" stroke="#000" stroke-width="1.1" fill="none"/><rect x="280.4" y="103.1" width="2" height="4" fill="#777"/><path d="M279.5,107.3 H284.3 M281.9,107.3 V109.5" stroke="#000" stroke-width="1"/></svg>
<svg style="left:0px;top:0px;" width="1310" height="750" viewBox="0 0 1310 750"><path d="M292,104.2 L297.5,109.2 M297.5,104.2 L292,109.2" stroke="#000" stroke-width="1.25"/></svg>
<div style="left:26px;top:117px;width:276px;height:16px;background:#b8b8b8;"></div>
<svg style="left:31px;top:122px;" width="11" height="8" viewBox="0 0 11 8"><path d="M0,1.3 H11 M0,3.9 H11 M0,6.5 H11" stroke="#4a4a4a" stroke-width="1"/></svg>
<div class="t" style="left:45.80px;top:121.98px;font-size:9px;line-height:9px;color:#111;font-weight:normal;-webkit-text-stroke:0.2px #111;transform:scaleX(0.8308);transform-origin:0 0;">Process Order</div>
<svg style="left:266px;top:125px;" width="5" height="3" viewBox="0 0 5 3"><path d="M0,0 H5 L2.5,3 Z" fill="#222"/></svg>
<svg style="left:275px;top:120px;" width="9" height="11" viewBox="0 0 9 11"><path d="M4.5,0 L9,5 H6 V11 H3 V5 H0 Z" fill="#10c050" stroke="#0a7a30" stroke-width="0.5"/></svg>
<svg style="left:289px;top:120px;" width="9" height="11" viewBox="0 0 9 11"><path d="M4.5,11 L9,6 H6 V0 H3 V6 H0 Z" fill="#10c050" stroke="#0a7a30" stroke-width="0.5"/></svg>
<div style="left:26px;top:133px;width:265px;height:380px;background:#d4d4d4;border-left:2px solid #dedede;border-bottom:1px solid #e6e6e6;box-sizing:border-box"></div>
<div style="left:291px;top:133px;width:11px;height:370px;background:#7e7e7e;"></div>
<div style="left:291.5px;top:174px;width:10px;height:151px;background:#a6a6a6;border:1px solid #969696;box-sizing:border-box"></div>
<div style="left:291px;top:133px;width:11px;height:10px;background:#b8b8b8;"></div>
<div style="left:291px;top:503px;width:11px;height:10px;background:#b8b8b8;"></div>
<svg style="left:293px;top:136px;" width="7" height="4" viewBox="0 0 7 4"><path d="M0,4 L3.5,0 L7,4 Z" fill="#111"/></svg>
<svg style="left:293px;top:506px;" width="7" height="4" viewBox="0 0 7 4"><path d="M0,0 L7,0 L3.5,4 Z" fill="#111"/></svg>
<div style="left:26px;top:513px;width:276px;height:16px;background:#a9a9a9;"></div>
<div style="left:27px;top:513px;width:72px;height:15px;background:#d2d2d2;border-bottom:1px solid #555;border-right:1px solid #555;box-sizing:border-box"></div>
<svg style="left:0px;top:0px;" width="1310" height="750" viewBox="0 0 1310 750"><path d="M29.3,518 V515 H31.5 L32.3,515.8 H34.8 V518 Z" fill="#f2e040" stroke="#a09020" stroke-width="0.6"/><rect x="32.8" y="517.8" width="6" height="6.6" fill="#e8ecff" stroke="#3a40b0" stroke-width="0.9"/><rect x="34.3" y="519.3" width="3" height="3.6" fill="#2a3070"/><path d="M34.3,521.1 H37.3" stroke="#e0c040" stroke-width="0.8"/></svg>
<div class="t" style="left:41.50px;top:517.18px;font-size:9px;line-height:9px;color:#111;font-weight:normal;-webkit-text-stroke:0.2px #111;transform:scaleX(0.8423);transform-origin:0 0;">Project Browser</div>
<svg style="left:0px;top:0px;" width="1310" height="750" viewBox="0 0 1310 750"><path d="M102.5,517.5 L106.5,514.5 L112.5,520 L108.5,523.5 Z" fill="#f0d830" stroke="#8a7a20" stroke-width="0.6"/><path d="M106.5,514.5 L109,513.5 L113.5,518 L112.5,520 Z" fill="#e8e8ff" stroke="#8a8ac0" stroke-width="0.6"/><path d="M108.5,522 L110,524.5" stroke="#111" stroke-width="1.2"/></svg>
<div class="t" style="left:114.00px;top:517.18px;font-size:9px;line-height:9px;color:#111;font-weight:normal;-webkit-text-stroke:0.2px #111;transform:scaleX(0.8369);transform-origin:0 0;">Resources</div>
<div style="left:302px;top:95px;width:5px;height:434px;background:#b8b8b8;"></div>
<div style="left:304px;top:95px;width:1px;height:434px;background:#8a8a8a;"></div>
<div style="left:305px;top:95px;width:1px;height:434px;background:#555;"></div>
<div style="left:306px;top:95px;width:1px;height:434px;background:#909090;"></div>
<div style="left:307px;top:95px;width:605px;height:18px;background:#acacac;"></div>
<div style="left:307px;top:95px;width:605px;height:1px;background:#9a9a9a;"></div>
<svg style="left:310.5px;top:102px;" width="8" height="7" viewBox="0 0 8 7"><path d="M0.7,0.7 L3.5,3.5 L0.7,6.3 M4.2,0.7 L7,3.5 L4.2,6.3" stroke="#000" stroke-width="1.6" fill="none"/></svg>
<svg style="left:323.5px;top:99.5px;" width="13" height="12" viewBox="0 0 13 12"><circle cx="2.6" cy="2.2" r="1.5" fill="#fff" stroke="#222" stroke-width="0.8"/><path d="M2.6,3.7 V7" stroke="#111" stroke-width="1.3"/><path d="M0.8,5 H4.4 M2.6,6.8 L1.1,10 M2.6,6.8 L4.1,10" stroke="#222" stroke-width="0.8"/><ellipse cx="9.3" cy="3.1" rx="2.7" ry="2" fill="#efe0d4" stroke="#666" stroke-width="0.7"/><ellipse cx="9.3" cy="8.9" rx="2.7" ry="2" fill="#efe0d4" stroke="#666" stroke-width="0.7"/><path d="M7.6,3.1 H11 M7.6,8.9 H11" stroke="#a08070" stroke-width="0.5"/></svg>
<div class="t" style="left:347.50px;top:101.98px;font-size:9px;line-height:9px;color:#8a8a8a;font-weight:normal;-webkit-text-stroke:0.05px #8a8a8a;transform:scaleX(0.8340);transform-origin:0 0;">Use Case Diagram: "Deliver Books"</div>
<svg style="left:0px;top:0px;" width="1310" height="750" viewBox="0 0 1310 750"><path d="M887,103.5 H893.3 L890.15,107.0 Z" fill="#000"/></svg>
<svg style="left:0px;top:0px;" width="1310" height="750" viewBox="0 0 1310 750"><path d="M901.2,102.8 L906.7,107.8 M906.7,102.8 L901.2,107.8" stroke="#000" stroke-width="1.25"/></svg>
<div style="left:307px;top:113px;width:605px;height:16px;background:#aaaaaa;"></div>
<div style="left:307px;top:112.5px;width:605px;height:1px;background:#8e8e8e;"></div>
<div style="left:307px;top:128px;width:605px;height:1px;background:#8a8a8a;"></div>
<svg style="left:308px;top:115.5px;" width="13" height="12" viewBox="0 0 13 12"><circle cx="2.6" cy="2.2" r="1.5" fill="#fff" stroke="#222" stroke-width="0.8"/><path d="M2.6,3.7 V7" stroke="#111" stroke-width="1.3"/><path d="M0.8,5 H4.4 M2.6,6.8 L1.1,10 M2.6,6.8 L4.1,10" stroke="#222" stroke-width="0.8"/><ellipse cx="9.3" cy="3.1" rx="2.7" ry="2" fill="#efe0d4" stroke="#666" stroke-width="0.7"/><ellipse cx="9.3" cy="8.9" rx="2.7" ry="2" fill="#efe0d4" stroke="#666" stroke-width="0.7"/><path d="M7.6,3.1 H11 M7.6,8.9 H11" stroke="#a08070" stroke-width="0.5"/></svg>
<div class="t" style="left:320.80px;top:118.78px;font-size:9px;line-height:9px;color:#111;font-weight:normal;-webkit-text-stroke:0.2px #111;transform:scaleX(0.8527);transform-origin:0 0;">Manage Users</div>
<svg style="left:378px;top:115.5px;" width="13" height="12" viewBox="0 0 13 12"><circle cx="2.6" cy="2.2" r="1.5" fill="#fff" stroke="#222" stroke-width="0.8"/><path d="M2.6,3.7 V7" stroke="#111" stroke-width="1.3"/><path d="M0.8,5 H4.4 M2.6,6.8 L1.1,10 M2.6,6.8 L4.1,10" stroke="#222" stroke-width="0.8"/><ellipse cx="9.3" cy="3.1" rx="2.7" ry="2" fill="#efe0d4" stroke="#666" stroke-width="0.7"/><ellipse cx="9.3" cy="8.9" rx="2.7" ry="2" fill="#efe0d4" stroke="#666" stroke-width="0.7"/><path d="M7.6,3.1 H11 M7.6,8.9 H11" stroke="#a08070" stroke-width="0.5"/></svg>
<div class="t" style="left:390.10px;top:118.78px;font-size:9px;line-height:9px;color:#111;font-weight:normal;-webkit-text-stroke:0.2px #111;transform:scaleX(0.8884);transform-origin:0 0;">Manage Inventory</div>
<div style="left:459px;top:114px;width:89px;height:15px;background:#d8d8d8;border:1px solid #777;border-bottom:none;box-sizing:border-box"></div>
<svg style="left:461px;top:116.5px;" width="13" height="12" viewBox="0 0 13 12"><circle cx="2.6" cy="2.2" r="1.5" fill="#fff" stroke="#222" stroke-width="0.8"/><path d="M2.6,3.7 V7" stroke="#111" stroke-width="1.3"/><path d="M0.8,5 H4.4 M2.6,6.8 L1.1,10 M2.6,6.8 L4.1,10" stroke="#222" stroke-width="0.8"/><ellipse cx="9.3" cy="3.1" rx="2.7" ry="2" fill="#efe0d4" stroke="#666" stroke-width="0.7"/><ellipse cx="9.3" cy="8.9" rx="2.7" ry="2" fill="#efe0d4" stroke="#666" stroke-width="0.7"/><path d="M7.6,3.1 H11 M7.6,8.9 H11" stroke="#a08070" stroke-width="0.5"/></svg>
<div class="t" style="left:473.30px;top:119.18px;font-size:9px;line-height:9px;color:#111;font-weight:normal;-webkit-text-stroke:0.2px #111;transform:scaleX(0.9725);transform-origin:0 0;">*Deliver Books</div>
<svg style="left:539px;top:119px;" width="6" height="6" viewBox="0 0 6 6"><path d="M0.5,0.5 L5.5,5.5 M5.5,0.5 L0.5,5.5" stroke="#111" stroke-width="1.2"/></svg>
<svg style="left:892px;top:117px;" width="4" height="7" viewBox="0 0 4 7"><path d="M4,0 L0,3.5 L4,7 Z" fill="none" stroke="#555" stroke-width="0.8"/></svg>
<svg style="left:903px;top:117px;" width="4" height="7" viewBox="0 0 4 7"><path d="M0,0 L4,3.5 L0,7 Z" fill="none" stroke="#555" stroke-width="0.8"/></svg>
<div style="left:307px;top:129px;width:594.5px;height:388px;background:#ffffff;"></div>
<div style="left:901px;top:129px;width:11px;height:399px;background:#7e7e7e;"></div>
<div style="left:901.5px;top:139.5px;width:10px;height:165.5px;background:#a6a6a6;border:1px solid #969696;box-sizing:border-box"></div>
<div style="left:901px;top:129px;width:11px;height:10px;background:#b8b8b8;"></div>
<div style="left:901px;top:507px;width:11px;height:10px;background:#b8b8b8;"></div>
<svg style="left:903px;top:132px;" width="7" height="4" viewBox="0 0 7 4"><path d="M0,4 L3.5,0 L7,4 Z" fill="#111"/></svg>
<svg style="left:903px;top:510px;" width="7" height="4" viewBox="0 0 7 4"><path d="M0,0 L7,0 L3.5,4 Z" fill="#111"/></svg>
<div style="left:307px;top:517px;width:605px;height:11px;background:#7e7e7e;"></div>
<div style="left:307px;top:517px;width:10px;height:10px;background:#b4b4b4;"></div>
<div style="left:318px;top:517px;width:566px;height:10px;background:#a6a6a6;"></div>
<div style="left:891px;top:517px;width:10px;height:10px;background:#b4b4b4;"></div>
<svg style="left:310px;top:519px;" width="4" height="7" viewBox="0 0 4 7"><path d="M4,0 L0,3.5 L4,7 Z" fill="#111"/></svg>
<svg style="left:894px;top:519px;" width="4" height="7" viewBox="0 0 4 7"><path d="M0,0 L4,3.5 L0,7 Z" fill="#111"/></svg>
<div style="left:912px;top:95px;width:4px;height:434px;background:#b8b8b8;"></div>
<div style="left:913px;top:95px;width:1px;height:434px;background:#8a8a8a;"></div>
<div style="left:914px;top:95px;width:1px;height:434px;background:#555;"></div>
<div style="left:915px;top:95px;width:1px;height:434px;background:#909090;"></div>
<div style="left:916px;top:95px;width:338px;height:22px;background:#ababab;"></div>
<div class="t" style="left:920.30px;top:99.62px;font-size:13.5px;line-height:13.5px;color:#333;font-weight:normal;-webkit-text-stroke:0.1px #333;transform:scaleX(0.9428);transform-origin:0 0;">Traceability</div>
<svg style="left:0px;top:0px;" width="1310" height="750" viewBox="0 0 1310 750"><path d="M1218.2,105 H1224.5 L1221.3500000000001,108.5 Z" fill="#000"/></svg>
<svg style="left:0px;top:0px;" width="1310" height="750" viewBox="0 0 1310 750"><path d="M1232.1000000000001,103.1 H1235.1000000000001 V107.1" stroke="#000" stroke-width="1.1" fill="none"/><rect x="1232.1000000000001" y="103.1" width="2" height="4" fill="#777"/><path d="M1231.2,107.3 H1236.0 M1233.6000000000001,107.3 V109.5" stroke="#000" stroke-width="1"/></svg>
<svg style="left:0px;top:0px;" width="1310" height="750" viewBox="0 0 1310 750"><path d="M1243.5,104.2 L1249.0,109.2 M1249.0,104.2 L1243.5,109.2" stroke="#000" stroke-width="1.25"/></svg>
<div style="left:916px;top:117px;width:338px;height:15px;background:#b8b8b8;"></div>
<div style="left:1254px;top:95px;width:4px;height:437px;background:#b0b0b0;"></div>
<div style="left:1254px;top:132px;width:4px;height:400px;background:#888888;"></div>
<div style="left:1254.5px;top:95px;width:1.5px;height:434px;background:#767676;"></div>
<div style="left:916px;top:132px;width:338px;height:397px;background:#d4d4d4;border-left:2px solid #dedede;border-right:2px solid #e2e2e2;border-bottom:2px solid #e6e6e6;box-sizing:border-box"></div>
<div style="left:1258px;top:95px;width:21px;height:437px;background:#b0b0b0;"></div>
<div style="left:1274px;top:100px;width:4px;height:16px;background:#a0a0a0;"></div>
<svg style="left:1256px;top:95px;" width="23" height="40" viewBox="0 0 23 40"><text transform="translate(6.8,5.2) rotate(90)" font-family="Liberation Sans" font-size="9" textLength="15.5" lengthAdjust="spacingAndGlyphs" fill="#111" stroke="#111" stroke-width="0.2">Start</text></svg>
<div style="left:22px;top:527.5px;width:892px;height:5px;background:#898989;"></div>
<div style="left:22px;top:527.5px;width:892px;height:1px;background:#767676;"></div>
<div style="left:914px;top:528.5px;width:344px;height:4.3px;background:#898989;"></div>
<div style="left:914px;top:528.5px;width:342px;height:1px;background:#6e6e6e;"></div>
<div style="left:0px;top:532.8px;width:1279px;height:171.2px;background:#adadad;"></div>
<div style="left:0px;top:532px;width:1px;height:172px;background:#474747;"></div>
<div style="left:1px;top:532px;width:1px;height:172px;background:#bcbcbc;"></div>
<div class="t" style="left:24.60px;top:537.12px;font-size:13.5px;line-height:13.5px;color:#383838;font-weight:normal;-webkit-text-stroke:0.1px #383838;transform:scaleX(0.9180);transform-origin:0 0;">Relationships</div>
<svg style="left:0px;top:0px;" width="1310" height="750" viewBox="0 0 1310 750"><path d="M1222.6,542.4 H1228.8999999999999 L1225.75,545.9 Z" fill="#000"/></svg>
<svg style="left:0px;top:0px;" width="1310" height="750" viewBox="0 0 1310 750"><path d="M1236.9,540.6 H1239.9 V544.6" stroke="#000" stroke-width="1.1" fill="none"/><rect x="1236.9" y="540.6" width="2" height="4" fill="#777"/><path d="M1236,544.8 H1240.8 M1238.4,544.8 V547" stroke="#000" stroke-width="1"/></svg>
<svg style="left:0px;top:0px;" width="1310" height="750" viewBox="0 0 1310 750"><path d="M1247.8,541.1 L1253.3,546.1 M1253.3,541.1 L1247.8,546.1" stroke="#000" stroke-width="1.25"/></svg>
<div style="left:22px;top:556px;width:1236px;height:13px;background:#acacac;"></div>
<div style="left:22px;top:569px;width:1236px;height:135px;background:#d4d4d4;"></div>
<div style="left:132px;top:555px;width:1px;height:14px;background:#a0a0a0;"></div>
<div style="left:241px;top:555px;width:1px;height:14px;background:#a0a0a0;"></div>
<div style="left:351px;top:555px;width:1px;height:14px;background:#a0a0a0;"></div>
<div style="left:461px;top:555px;width:1px;height:14px;background:#a0a0a0;"></div>
<div style="left:571px;top:555px;width:1px;height:14px;background:#a0a0a0;"></div>
<div style="left:681px;top:555px;width:1px;height:14px;background:#a0a0a0;"></div>
<div style="left:813px;top:555px;width:1px;height:14px;background:#a0a0a0;"></div>
<div style="left:923px;top:555px;width:1px;height:14px;background:#a0a0a0;"></div>
<div style="left:1033px;top:555px;width:1px;height:14px;background:#a0a0a0;"></div>
<div style="left:1143px;top:555px;width:1px;height:14px;background:#a0a0a0;"></div>
<div class="t" style="left:25.30px;top:558.08px;font-size:8.8px;line-height:8.8px;color:#111;font-weight:normal;-webkit-text-stroke:0.12px #111;transform:scaleX(0.8500);transform-origin:0 0;">Relationship</div>
<div class="t" style="left:135.00px;top:558.08px;font-size:8.8px;line-height:8.8px;color:#111;font-weight:normal;-webkit-text-stroke:0.12px #111;transform:scaleX(0.8500);transform-origin:0 0;">Source</div>
<div class="t" style="left:245.30px;top:558.08px;font-size:8.8px;line-height:8.8px;color:#111;font-weight:normal;-webkit-text-stroke:0.12px #111;transform:scaleX(0.8500);transform-origin:0 0;">Source Version</div>
<div class="t" style="left:355.00px;top:558.08px;font-size:8.8px;line-height:8.8px;color:#111;font-weight:normal;-webkit-text-stroke:0.12px #111;transform:scaleX(0.8500);transform-origin:0 0;">Target</div>
<div class="t" style="left:464.80px;top:558.08px;font-size:8.8px;line-height:8.8px;color:#111;font-weight:normal;-webkit-text-stroke:0.12px #111;transform:scaleX(0.8500);transform-origin:0 0;">Target Version</div>
<div class="t" style="left:574.80px;top:558.08px;font-size:8.8px;line-height:8.8px;color:#111;font-weight:normal;-webkit-text-stroke:0.12px #111;transform:scaleX(0.8500);transform-origin:0 0;">Target Role</div>
<div class="t" style="left:685.30px;top:558.08px;font-size:8.8px;line-height:8.8px;color:#111;font-weight:normal;-webkit-text-stroke:0.12px #111;transform:scaleX(0.8500);transform-origin:0 0;">Target Cardinality</div>
<div class="t" style="left:817.80px;top:558.08px;font-size:8.8px;line-height:8.8px;color:#111;font-weight:normal;-webkit-text-stroke:0.12px #111;transform:scaleX(0.8500);transform-origin:0 0;">Navigability</div>
<div class="t" style="left:927.50px;top:558.08px;font-size:8.8px;line-height:8.8px;color:#111;font-weight:normal;-webkit-text-stroke:0.12px #111;transform:scaleX(0.8500);transform-origin:0 0;">Target Type</div>
<div class="t" style="left:1037.00px;top:558.08px;font-size:8.8px;line-height:8.8px;color:#111;font-weight:normal;-webkit-text-stroke:0.12px #111;transform:scaleX(0.8500);transform-origin:0 0;">Target Stereotype</div>
<div class="t" style="left:1147.50px;top:558.08px;font-size:8.8px;line-height:8.8px;color:#111;font-weight:normal;-webkit-text-stroke:0.12px #111;transform:scaleX(0.8500);transform-origin:0 0;">View</div>
<div class="t" style="left:25.30px;top:572.88px;font-size:8px;line-height:8px;color:#000;font-weight:normal;-webkit-text-stroke:0.15px #000;transform:scaleX(0.8900);transform-origin:0 0;">Association</div>
<div class="t" style="left:135.00px;top:572.88px;font-size:8px;line-height:8px;color:#000;font-weight:normal;-webkit-text-stroke:0.15px #000;transform:scaleX(0.8900);transform-origin:0 0;">Storeroom Worker</div>
<div class="t" style="left:245.30px;top:572.88px;font-size:8px;line-height:8px;color:#000;font-weight:normal;-webkit-text-stroke:0.15px #000;transform:scaleX(0.8900);transform-origin:0 0;">1.0</div>
<div class="t" style="left:355.00px;top:572.88px;font-size:8px;line-height:8px;color:#000;font-weight:normal;-webkit-text-stroke:0.15px #000;transform:scaleX(0.8900);transform-origin:0 0;">Process Order</div>
<div class="t" style="left:464.80px;top:572.88px;font-size:8px;line-height:8px;color:#000;font-weight:normal;-webkit-text-stroke:0.15px #000;transform:scaleX(0.8900);transform-origin:0 0;">1.0</div>
<div class="t" style="left:817.80px;top:572.88px;font-size:8px;line-height:8px;color:#000;font-weight:normal;-webkit-text-stroke:0.15px #000;transform:scaleX(0.8900);transform-origin:0 0;">Source -&gt; Destination</div>
<div class="t" style="left:927.50px;top:572.88px;font-size:8px;line-height:8px;color:#000;font-weight:normal;-webkit-text-stroke:0.15px #000;transform:scaleX(0.8900);transform-origin:0 0;">UseCase</div>
<div class="t" style="left:1147.50px;top:572.88px;font-size:8px;line-height:8px;color:#000;font-weight:normal;-webkit-text-stroke:0.15px #000;transform:scaleX(0.8900);transform-origin:0 0;">Visible</div>
<div class="t" style="left:25.30px;top:586.18px;font-size:8px;line-height:8px;color:#000;font-weight:normal;-webkit-text-stroke:0.15px #000;transform:scaleX(0.8900);transform-origin:0 0;">Realization</div>
<div class="t" style="left:135.00px;top:586.18px;font-size:8px;line-height:8px;color:#000;font-weight:normal;-webkit-text-stroke:0.15px #000;transform:scaleX(0.8900);transform-origin:0 0;">Process Order</div>
<div class="t" style="left:245.30px;top:586.18px;font-size:8px;line-height:8px;color:#000;font-weight:normal;-webkit-text-stroke:0.15px #000;transform:scaleX(0.8900);transform-origin:0 0;">1.0</div>
<div class="t" style="left:355.00px;top:586.18px;font-size:8px;line-height:8px;color:#000;font-weight:normal;-webkit-text-stroke:0.15px #000;transform:scaleX(0.8900);transform-origin:0 0;">( Order )</div>
<div class="t" style="left:464.80px;top:586.18px;font-size:8px;line-height:8px;color:#000;font-weight:normal;-webkit-text-stroke:0.15px #000;transform:scaleX(0.8900);transform-origin:0 0;">1.0</div>
<div class="t" style="left:817.80px;top:586.18px;font-size:8px;line-height:8px;color:#000;font-weight:normal;-webkit-text-stroke:0.15px #000;transform:scaleX(0.8900);transform-origin:0 0;">Source -&gt; Destination</div>
<div class="t" style="left:927.50px;top:586.18px;font-size:8px;line-height:8px;color:#000;font-weight:normal;-webkit-text-stroke:0.15px #000;transform:scaleX(0.8900);transform-origin:0 0;">Class</div>
<div class="t" style="left:25.30px;top:599.48px;font-size:8px;line-height:8px;color:#000;font-weight:normal;-webkit-text-stroke:0.15px #000;transform:scaleX(0.8900);transform-origin:0 0;">Realization</div>
<div class="t" style="left:135.00px;top:599.48px;font-size:8px;line-height:8px;color:#000;font-weight:normal;-webkit-text-stroke:0.15px #000;transform:scaleX(0.8900);transform-origin:0 0;">Process Order</div>
<div class="t" style="left:245.30px;top:599.48px;font-size:8px;line-height:8px;color:#000;font-weight:normal;-webkit-text-stroke:0.15px #000;transform:scaleX(0.8900);transform-origin:0 0;">1.0</div>
<div class="t" style="left:355.00px;top:599.48px;font-size:8px;line-height:8px;color:#000;font-weight:normal;-webkit-text-stroke:0.15px #000;transform:scaleX(0.8900);transform-origin:0 0;">( Passing on of roles leading to ...</div>
<div class="t" style="left:464.80px;top:599.48px;font-size:8px;line-height:8px;color:#000;font-weight:normal;-webkit-text-stroke:0.15px #000;transform:scaleX(0.8900);transform-origin:0 0;">1.0</div>
<div class="t" style="left:817.80px;top:599.48px;font-size:8px;line-height:8px;color:#000;font-weight:normal;-webkit-text-stroke:0.15px #000;transform:scaleX(0.8900);transform-origin:0 0;">Source -&gt; Destination</div>
<div class="t" style="left:927.50px;top:599.48px;font-size:8px;line-height:8px;color:#000;font-weight:normal;-webkit-text-stroke:0.15px #000;transform:scaleX(0.8900);transform-origin:0 0;">Requirement</div>
<div class="t" style="left:1037.00px;top:599.48px;font-size:8px;line-height:8px;color:#000;font-weight:normal;-webkit-text-stroke:0.15px #000;transform:scaleX(0.8900);transform-origin:0 0;">Functional</div>
<div class="t" style="left:25.30px;top:612.78px;font-size:8px;line-height:8px;color:#000;font-weight:normal;-webkit-text-stroke:0.15px #000;transform:scaleX(0.8900);transform-origin:0 0;">Realization</div>
<div class="t" style="left:135.00px;top:612.78px;font-size:8px;line-height:8px;color:#000;font-weight:normal;-webkit-text-stroke:0.15px #000;transform:scaleX(0.8900);transform-origin:0 0;">Process Order</div>
<div class="t" style="left:245.30px;top:612.78px;font-size:8px;line-height:8px;color:#000;font-weight:normal;-webkit-text-stroke:0.15px #000;transform:scaleX(0.8900);transform-origin:0 0;">1.0</div>
<div class="t" style="left:355.00px;top:612.78px;font-size:8px;line-height:8px;color:#000;font-weight:normal;-webkit-text-stroke:0.15px #000;transform:scaleX(0.8900);transform-origin:0 0;">( Reduce wasted time sending ...</div>
<div class="t" style="left:464.80px;top:612.78px;font-size:8px;line-height:8px;color:#000;font-weight:normal;-webkit-text-stroke:0.15px #000;transform:scaleX(0.8900);transform-origin:0 0;">1.0</div>
<div class="t" style="left:817.80px;top:612.78px;font-size:8px;line-height:8px;color:#000;font-weight:normal;-webkit-text-stroke:0.15px #000;transform:scaleX(0.8900);transform-origin:0 0;">Source -&gt; Destination</div>
<div class="t" style="left:927.50px;top:612.78px;font-size:8px;line-height:8px;color:#000;font-weight:normal;-webkit-text-stroke:0.15px #000;transform:scaleX(0.8900);transform-origin:0 0;">Requirement</div>
<div class="t" style="left:1037.00px;top:612.78px;font-size:8px;line-height:8px;color:#000;font-weight:normal;-webkit-text-stroke:0.15px #000;transform:scaleX(0.8900);transform-origin:0 0;">Functional</div>
<div class="t" style="left:25.30px;top:626.08px;font-size:8px;line-height:8px;color:#000;font-weight:normal;-webkit-text-stroke:0.15px #000;transform:scaleX(0.8900);transform-origin:0 0;">Realization</div>
<div class="t" style="left:135.00px;top:626.08px;font-size:8px;line-height:8px;color:#000;font-weight:normal;-webkit-text-stroke:0.15px #000;transform:scaleX(0.8900);transform-origin:0 0;">Process Order</div>
<div class="t" style="left:245.30px;top:626.08px;font-size:8px;line-height:8px;color:#000;font-weight:normal;-webkit-text-stroke:0.15px #000;transform:scaleX(0.8900);transform-origin:0 0;">1.0</div>
<div class="t" style="left:355.00px;top:626.08px;font-size:8px;line-height:8px;color:#000;font-weight:normal;-webkit-text-stroke:0.15px #000;transform:scaleX(0.8900);transform-origin:0 0;">( REQ015 - Process Credit Car...</div>
<div class="t" style="left:464.80px;top:626.08px;font-size:8px;line-height:8px;color:#000;font-weight:normal;-webkit-text-stroke:0.15px #000;transform:scaleX(0.8900);transform-origin:0 0;">1.0</div>
<div class="t" style="left:817.80px;top:626.08px;font-size:8px;line-height:8px;color:#000;font-weight:normal;-webkit-text-stroke:0.15px #000;transform:scaleX(0.8900);transform-origin:0 0;">Source -&gt; Destination</div>
<div class="t" style="left:927.50px;top:626.08px;font-size:8px;line-height:8px;color:#000;font-weight:normal;-webkit-text-stroke:0.15px #000;transform:scaleX(0.8900);transform-origin:0 0;">Requirement</div>
<div class="t" style="left:1037.00px;top:626.08px;font-size:8px;line-height:8px;color:#000;font-weight:normal;-webkit-text-stroke:0.15px #000;transform:scaleX(0.8900);transform-origin:0 0;">Functional</div>
<div class="t" style="left:25.30px;top:639.38px;font-size:8px;line-height:8px;color:#000;font-weight:normal;-webkit-text-stroke:0.15px #000;transform:scaleX(0.8900);transform-origin:0 0;">Realization</div>
<div class="t" style="left:135.00px;top:639.38px;font-size:8px;line-height:8px;color:#000;font-weight:normal;-webkit-text-stroke:0.15px #000;transform:scaleX(0.8900);transform-origin:0 0;">Process Order</div>
<div class="t" style="left:245.30px;top:639.38px;font-size:8px;line-height:8px;color:#000;font-weight:normal;-webkit-text-stroke:0.15px #000;transform:scaleX(0.8900);transform-origin:0 0;">1.0</div>
<div class="t" style="left:355.00px;top:639.38px;font-size:8px;line-height:8px;color:#000;font-weight:normal;-webkit-text-stroke:0.15px #000;transform:scaleX(0.8900);transform-origin:0 0;">( REQ033 - Retrieve Books )</div>
<div class="t" style="left:464.80px;top:639.38px;font-size:8px;line-height:8px;color:#000;font-weight:normal;-webkit-text-stroke:0.15px #000;transform:scaleX(0.8900);transform-origin:0 0;">1.0</div>
<div class="t" style="left:817.80px;top:639.38px;font-size:8px;line-height:8px;color:#000;font-weight:normal;-webkit-text-stroke:0.15px #000;transform:scaleX(0.8900);transform-origin:0 0;">Source -&gt; Destination</div>
<div class="t" style="left:927.50px;top:639.38px;font-size:8px;line-height:8px;color:#000;font-weight:normal;-webkit-text-stroke:0.15px #000;transform:scaleX(0.8900);transform-origin:0 0;">Requirement</div>
<div class="t" style="left:1037.00px;top:639.38px;font-size:8px;line-height:8px;color:#000;font-weight:normal;-webkit-text-stroke:0.15px #000;transform:scaleX(0.8900);transform-origin:0 0;">Functional</div>
<div class="t" style="left:25.30px;top:652.68px;font-size:8px;line-height:8px;color:#000;font-weight:normal;-webkit-text-stroke:0.15px #000;transform:scaleX(0.8900);transform-origin:0 0;">Realization</div>
<div class="t" style="left:135.00px;top:652.68px;font-size:8px;line-height:8px;color:#000;font-weight:normal;-webkit-text-stroke:0.15px #000;transform:scaleX(0.8900);transform-origin:0 0;">Process Order</div>
<div class="t" style="left:245.30px;top:652.68px;font-size:8px;line-height:8px;color:#000;font-weight:normal;-webkit-text-stroke:0.15px #000;transform:scaleX(0.8900);transform-origin:0 0;">1.0</div>
<div class="t" style="left:355.00px;top:652.68px;font-size:8px;line-height:8px;color:#000;font-weight:normal;-webkit-text-stroke:0.15px #000;transform:scaleX(0.8900);transform-origin:0 0;">( REQ102 - System must be a...</div>
<div class="t" style="left:464.80px;top:652.68px;font-size:8px;line-height:8px;color:#000;font-weight:normal;-webkit-text-stroke:0.15px #000;transform:scaleX(0.8900);transform-origin:0 0;">1.0</div>
<div class="t" style="left:817.80px;top:652.68px;font-size:8px;line-height:8px;color:#000;font-weight:normal;-webkit-text-stroke:0.15px #000;transform:scaleX(0.8900);transform-origin:0 0;">Source -&gt; Destination</div>
<div class="t" style="left:927.50px;top:652.68px;font-size:8px;line-height:8px;color:#000;font-weight:normal;-webkit-text-stroke:0.15px #000;transform:scaleX(0.8900);transform-origin:0 0;">Requirement</div>
<div class="t" style="left:1037.00px;top:652.68px;font-size:8px;line-height:8px;color:#000;font-weight:normal;-webkit-text-stroke:0.15px #000;transform:scaleX(0.8900);transform-origin:0 0;">Functional</div>
<div class="t" style="left:25.30px;top:665.98px;font-size:8px;line-height:8px;color:#000;font-weight:normal;-webkit-text-stroke:0.15px #000;transform:scaleX(0.8900);transform-origin:0 0;">Realization</div>
<div class="t" style="left:135.00px;top:665.98px;font-size:8px;line-height:8px;color:#000;font-weight:normal;-webkit-text-stroke:0.15px #000;transform:scaleX(0.8900);transform-origin:0 0;">Process Order</div>
<div class="t" style="left:245.30px;top:665.98px;font-size:8px;line-height:8px;color:#000;font-weight:normal;-webkit-text-stroke:0.15px #000;transform:scaleX(0.8900);transform-origin:0 0;">1.0</div>
<div class="t" style="left:355.00px;top:665.98px;font-size:8px;line-height:8px;color:#000;font-weight:normal;-webkit-text-stroke:0.15px #000;transform:scaleX(0.8900);transform-origin:0 0;">( REQ104 - Non storage of cus...</div>
<div class="t" style="left:464.80px;top:665.98px;font-size:8px;line-height:8px;color:#000;font-weight:normal;-webkit-text-stroke:0.15px #000;transform:scaleX(0.8900);transform-origin:0 0;">1.0</div>
<div class="t" style="left:817.80px;top:665.98px;font-size:8px;line-height:8px;color:#000;font-weight:normal;-webkit-text-stroke:0.15px #000;transform:scaleX(0.8900);transform-origin:0 0;">Source -&gt; Destination</div>
<div class="t" style="left:927.50px;top:665.98px;font-size:8px;line-height:8px;color:#000;font-weight:normal;-webkit-text-stroke:0.15px #000;transform:scaleX(0.8900);transform-origin:0 0;">Requirement</div>
<div class="t" style="left:1037.00px;top:665.98px;font-size:8px;line-height:8px;color:#000;font-weight:normal;-webkit-text-stroke:0.15px #000;transform:scaleX(0.8900);transform-origin:0 0;">Functional</div>
<div class="t" style="left:25.30px;top:679.28px;font-size:8px;line-height:8px;color:#000;font-weight:normal;-webkit-text-stroke:0.15px #000;transform:scaleX(0.8900);transform-origin:0 0;">Realization</div>
<div class="t" style="left:135.00px;top:679.28px;font-size:8px;line-height:8px;color:#000;font-weight:normal;-webkit-text-stroke:0.15px #000;transform:scaleX(0.8900);transform-origin:0 0;">Process Order</div>
<div class="t" style="left:245.30px;top:679.28px;font-size:8px;line-height:8px;color:#000;font-weight:normal;-webkit-text-stroke:0.15px #000;transform:scaleX(0.8900);transform-origin:0 0;">1.0</div>
<div class="t" style="left:355.00px;top:679.28px;font-size:8px;line-height:8px;color:#000;font-weight:normal;-webkit-text-stroke:0.15px #000;transform:scaleX(0.8900);transform-origin:0 0;">( REQ106 - Retrieval of historic...</div>
<div class="t" style="left:464.80px;top:679.28px;font-size:8px;line-height:8px;color:#000;font-weight:normal;-webkit-text-stroke:0.15px #000;transform:scaleX(0.8900);transform-origin:0 0;">1.0</div>
<div class="t" style="left:817.80px;top:679.28px;font-size:8px;line-height:8px;color:#000;font-weight:normal;-webkit-text-stroke:0.15px #000;transform:scaleX(0.8900);transform-origin:0 0;">Source -&gt; Destination</div>
<div class="t" style="left:927.50px;top:679.28px;font-size:8px;line-height:8px;color:#000;font-weight:normal;-webkit-text-stroke:0.15px #000;transform:scaleX(0.8900);transform-origin:0 0;">Requirement</div>
<div class="t" style="left:1037.00px;top:679.28px;font-size:8px;line-height:8px;color:#000;font-weight:normal;-webkit-text-stroke:0.15px #000;transform:scaleX(0.8900);transform-origin:0 0;">Functional</div>
<div class="t" style="left:25.30px;top:692.58px;font-size:8px;line-height:8px;color:#000;font-weight:normal;-webkit-text-stroke:0.15px #000;transform:scaleX(0.8900);transform-origin:0 0;">UseCase</div>
<div class="t" style="left:135.00px;top:692.58px;font-size:8px;line-height:8px;color:#000;font-weight:normal;-webkit-text-stroke:0.15px #000;transform:scaleX(0.8900);transform-origin:0 0;">Process Order</div>
<div class="t" style="left:245.30px;top:692.58px;font-size:8px;line-height:8px;color:#000;font-weight:normal;-webkit-text-stroke:0.15px #000;transform:scaleX(0.8900);transform-origin:0 0;">1.0</div>
<div class="t" style="left:355.00px;top:692.58px;font-size:8px;line-height:8px;color:#000;font-weight:normal;-webkit-text-stroke:0.15px #000;transform:scaleX(0.8900);transform-origin:0 0;">Package Order</div>
<div class="t" style="left:464.80px;top:692.58px;font-size:8px;line-height:8px;color:#000;font-weight:normal;-webkit-text-stroke:0.15px #000;transform:scaleX(0.8900);transform-origin:0 0;">1.0</div>
<div class="t" style="left:817.80px;top:692.58px;font-size:8px;line-height:8px;color:#000;font-weight:normal;-webkit-text-stroke:0.15px #000;transform:scaleX(0.8900);transform-origin:0 0;">Source -&gt; Destination</div>
<div class="t" style="left:927.50px;top:692.58px;font-size:8px;line-height:8px;color:#000;font-weight:normal;-webkit-text-stroke:0.15px #000;transform:scaleX(0.8900);transform-origin:0 0;">UseCase</div>
<div class="t" style="left:1147.50px;top:692.58px;font-size:8px;line-height:8px;color:#000;font-weight:normal;-webkit-text-stroke:0.15px #000;transform:scaleX(0.8900);transform-origin:0 0;">Visible</div>
<div style="left:0px;top:704px;width:1279px;height:15px;background:#595959;"></div>
<div style="left:0px;top:704px;width:1279px;height:1px;background:#3e3e3e;"></div>
<div class="t" style="left:3.00px;top:708.53px;font-size:8.5px;line-height:8.5px;color:#f0f0f0;font-weight:normal;-webkit-text-stroke:0.15px #f0f0f0;transform:scaleX(0.8763);transform-origin:0 0;">Use Case Diagram:Deliver Books:</div>
<div class="t" style="left:122.10px;top:708.53px;font-size:8.5px;line-height:8.5px;color:#f0f0f0;font-weight:normal;-webkit-text-stroke:0.15px #f0f0f0;transform:scaleX(0.9354);transform-origin:0 0;">created: 7/03/2005</div>
<div class="t" style="left:191.80px;top:708.53px;font-size:8.5px;line-height:8.5px;color:#f0f0f0;font-weight:normal;-webkit-text-stroke:0.15px #f0f0f0;transform:scaleX(0.8887);transform-origin:0 0;">modified: 12/09/2016 11:42:05 AM</div>
<div class="t" style="left:313.00px;top:708.53px;font-size:8.5px;line-height:8.5px;color:#f0f0f0;font-weight:normal;-webkit-text-stroke:0.15px #f0f0f0;transform:scaleX(0.9096);transform-origin:0 0;">113%</div>
<div class="t" style="left:339.00px;top:708.53px;font-size:8.5px;line-height:8.5px;color:#f0f0f0;font-weight:normal;-webkit-text-stroke:0.15px #f0f0f0;transform:scaleX(0.8448);transform-origin:0 0;">780 x 1138</div>
<div class="t" style="left:1056.58px;top:707.77px;font-size:10px;line-height:10px;color:#a8a8a8;font-weight:normal;-webkit-text-stroke:0.1px #a8a8a8;">−</div>
<div style="left:1071px;top:712px;width:56px;height:1px;background:#a0a0a0;"></div>
<div style="left:1069px;top:708px;width:2px;height:9px;background:#c8c8c8;"></div>
<div class="t" style="left:1134.08px;top:707.77px;font-size:10px;line-height:10px;color:#a8a8a8;font-weight:normal;-webkit-text-stroke:0.1px #a8a8a8;">+</div>
<div class="t" style="left:1149.70px;top:708.78px;font-size:8px;line-height:8px;color:#9c9c9c;font-weight:normal;-webkit-text-stroke:0.05px #9c9c9c;transform:scaleX(0.8800);transform-origin:0 0;">CAP</div>
<div class="t" style="left:1175.40px;top:708.78px;font-size:8px;line-height:8px;color:#9c9c9c;font-weight:normal;-webkit-text-stroke:0.05px #9c9c9c;transform:scaleX(0.8800);transform-origin:0 0;">NUM</div>
<div class="t" style="left:1204.00px;top:708.78px;font-size:8px;line-height:8px;color:#9c9c9c;font-weight:normal;-webkit-text-stroke:0.05px #9c9c9c;transform:scaleX(0.8800);transform-origin:0 0;">SCRL</div>
<div class="t" style="left:1235.40px;top:708.78px;font-size:8px;line-height:8px;color:#9c9c9c;font-weight:normal;-webkit-text-stroke:0.05px #9c9c9c;transform:scaleX(0.8800);transform-origin:0 0;">CLOUD</div>
<div style="left:25px;top:133px;width:266px;height:380px;overflow:hidden;position:absolute">
<div style="position:absolute;left:-25px;top:-133px;width:1310px;height:750px"><svg style="left:69.8px;top:134.3px;" width="11" height="11" viewBox="0 0 11 11"><g transform="scale(0.82)"><rect x="0.5" y="0.5" width="4" height="4" fill="#fff" stroke="#333" stroke-width="0.8"/><rect x="0.5" y="0.5" width="4" height="1.5" fill="#3060d0"/><rect x="5.5" y="3.5" width="4" height="3" fill="#fff" stroke="#333" stroke-width="0.8"/><rect x="5.5" y="7" width="4" height="4" fill="#fff" stroke="#333" stroke-width="0.8"/><rect x="5.5" y="7" width="4" height="1.5" fill="#3060d0"/><path d="M2.5,4.5 V9 H5.5 M4.5,2.5 H7.5" stroke="#333" stroke-width="0.8" fill="none"/></g></svg>
<div class="t" style="left:81.60px;top:135.48px;font-size:9px;line-height:9px;color:#000;font-weight:normal;-webkit-text-stroke:0.2px #000;transform:scaleX(0.8332);transform-origin:0 0;">Custom Diagrams</div>
<svg style="left:57.599999999999994px;top:147.5px;" width="6" height="9" viewBox="0 0 6 9"><path d="M0.6,0.6 L4.6,4 L0.6,7.4 Z" fill="#f8f8f8" stroke="#222" stroke-width="1"/></svg>
<svg style="left:68.6px;top:146.0px;" width="11" height="11" viewBox="0 0 11 11"><path d="M1,1 H3.8 L4.8,2.2 H9.8 V9.6 H0.6 V1.4 Z" fill="#f9d4aa" stroke="#d4904a" stroke-width="0.9" stroke-linejoin="round"/></svg>
<div class="t" style="left:81.60px;top:147.48px;font-size:9px;line-height:9px;color:#000;font-weight:normal;-webkit-text-stroke:0.2px #000;transform:scaleX(0.8561);transform-origin:0 0;">UML Structural Diagrams</div>
<svg style="left:56.599999999999994px;top:160px;" width="6" height="6" viewBox="0 0 6 6"><path d="M6,0 V6 H0 Z" fill="#111"/></svg>
<svg style="left:68.6px;top:158.0px;" width="12" height="11" viewBox="0 0 12 11"><path d="M0.6,1.4 H3.8 L4.8,2.4 H9 V4.6 H2.6 L0.6,9.6 Z" fill="#f9d4aa" stroke="#d4904a" stroke-width="0.9" stroke-linejoin="round"/><rect x="2.6" y="2.8" width="6" height="2" fill="#fff"/><path d="M0.6,9.6 L2.6,4.6 H10.8 L8.8,9.6 Z" fill="#f9d4aa" stroke="#d4904a" stroke-width="0.9" stroke-linejoin="round"/></svg>
<div class="t" style="left:81.60px;top:159.48px;font-size:9px;line-height:9px;color:#000;font-weight:normal;-webkit-text-stroke:0.2px #000;transform:scaleX(0.8481);transform-origin:0 0;">UML Behavioral Diagrams</div>
<svg style="left:82.9px;top:170.3px;" width="11" height="11" viewBox="0 0 11 11"><g transform="scale(0.82)"><rect x="2" y="0.5" width="7" height="2.5" fill="#f0e040" stroke="#806000" stroke-width="0.6"/><path d="M5.5,3 V6 L2,9 M5.5,6 L9,9" stroke="#333" stroke-width="0.8" fill="none"/><circle cx="2" cy="10" r="1.5" fill="#e8d030"/><circle cx="9" cy="10" r="1.5" fill="#e8d030"/></g></svg>
<div class="t" style="left:94.70px;top:171.48px;font-size:9px;line-height:9px;color:#000;font-weight:normal;-webkit-text-stroke:0.2px #000;transform:scaleX(0.8545);transform-origin:0 0;">Activity Diagrams</div>
<svg style="left:82.9px;top:182.3px;" width="11" height="11" viewBox="0 0 11 11"><g transform="scale(0.82)"><rect x="0.5" y="0.5" width="4" height="3.5" fill="#f0e040" stroke="#333" stroke-width="0.7"/><rect x="6.5" y="6.5" width="4" height="4" fill="#f0e040" stroke="#333" stroke-width="0.7"/><path d="M4.5,2 H9 V6.5 M2.5,4 V9 H6.5" stroke="#d02040" stroke-width="0.8" fill="none"/></g></svg>
<div class="t" style="left:94.70px;top:183.48px;font-size:9px;line-height:9px;color:#000;font-weight:normal;-webkit-text-stroke:0.2px #000;transform:scaleX(0.8577);transform-origin:0 0;">Communication Diagrams</div>
<svg style="left:82.9px;top:194.3px;" width="11" height="11" viewBox="0 0 11 11"><g transform="scale(0.82)"><rect x="0.5" y="0.5" width="10" height="11" fill="#e04040" stroke="#802020" stroke-width="0.7"/><rect x="2.5" y="2.5" width="6" height="3" fill="#f0e040"/><rect x="2.5" y="7" width="6" height="3" fill="#f0e040"/></g></svg>
<div class="t" style="left:94.70px;top:195.48px;font-size:9px;line-height:9px;color:#000;font-weight:normal;-webkit-text-stroke:0.2px #000;transform:scaleX(0.8713);transform-origin:0 0;">Interaction Overview Diagrams</div>
<svg style="left:82.9px;top:206.3px;" width="11" height="11" viewBox="0 0 11 11"><g transform="scale(0.82)"><rect x="0.5" y="0.5" width="4" height="3" fill="#f0e040" stroke="#333" stroke-width="0.7"/><rect x="6.5" y="0.5" width="4" height="3" fill="#f0e040" stroke="#333" stroke-width="0.7"/><path d="M2.5,3.5 V11 M8.5,3.5 V11 M2.5,7 H8.5" stroke="#333" stroke-width="0.8"/></g></svg>
<div class="t" style="left:94.70px;top:207.48px;font-size:9px;line-height:9px;color:#000;font-weight:normal;-webkit-text-stroke:0.2px #000;transform:scaleX(0.8658);transform-origin:0 0;">Sequence Diagrams</div>
<svg style="left:82.9px;top:218.3px;" width="11" height="11" viewBox="0 0 11 11"><g transform="scale(0.82)"><rect x="3.5" y="1.5" width="6" height="5" rx="1.5" fill="#f0c050" stroke="#c08020" stroke-width="0.7"/><rect x="0.5" y="5.5" width="6" height="5" rx="1.5" fill="#f0c050" stroke="#c08020" stroke-width="0.7"/></g></svg>
<div class="t" style="left:94.70px;top:219.48px;font-size:9px;line-height:9px;color:#000;font-weight:normal;-webkit-text-stroke:0.2px #000;transform:scaleX(0.8738);transform-origin:0 0;">State Machine Diagrams</div>
<svg style="left:82.9px;top:230.3px;" width="11" height="11" viewBox="0 0 11 11"><g transform="scale(0.82)"><rect x="0.5" y="0.5" width="11" height="10" fill="#fff" stroke="#555" stroke-width="0.7"/><path d="M1,4 H5 L6,2 H11 M1,7 H11" stroke="#3050c0" stroke-width="0.8" fill="none"/></g></svg>
<div class="t" style="left:94.70px;top:231.48px;font-size:9px;line-height:9px;color:#000;font-weight:normal;-webkit-text-stroke:0.2px #000;transform:scaleX(0.8659);transform-origin:0 0;">Timing Diagrams</div>
<svg style="left:81.7px;top:241px;" width="12" height="12" viewBox="0 0 12 12"><circle cx="2.8" cy="2.2" r="1.6" fill="none" stroke="#333" stroke-width="0.8"/><path d="M2.8,3.8 V7 M0.6,5.2 H5 M2.8,7 L1.2,10.5 M2.8,7 L4.4,10.5" stroke="#333" stroke-width="0.8"/><ellipse cx="8.5" cy="3" rx="3" ry="2.2" fill="#efe3d6" stroke="#8a8a8a" stroke-width="0.8"/><ellipse cx="8.5" cy="9" rx="3" ry="2.2" fill="#efe3d6" stroke="#8a8a8a" stroke-width="0.8"/></svg>
<div class="t" style="left:94.70px;top:243.48px;font-size:9px;line-height:9px;color:#000;font-weight:normal;-webkit-text-stroke:0.2px #000;transform:scaleX(0.8308);transform-origin:0 0;">Use Case Diagrams</div>
<svg style="left:70.7px;top:255.5px;" width="6" height="9" viewBox="0 0 6 9"><path d="M0.6,0.6 L4.6,4 L0.6,7.4 Z" fill="#f8f8f8" stroke="#222" stroke-width="1"/></svg>
<svg style="left:81.7px;top:254.0px;" width="11" height="11" viewBox="0 0 11 11"><path d="M1,1 H3.8 L4.8,2.2 H9.8 V9.6 H0.6 V1.4 Z" fill="#f9d4aa" stroke="#d4904a" stroke-width="0.9" stroke-linejoin="round"/></svg>
<div class="t" style="left:94.70px;top:255.48px;font-size:9px;line-height:9px;color:#000;font-weight:normal;-webkit-text-stroke:0.2px #000;transform:scaleX(0.9157);transform-origin:0 0;">Interactions</div>
<svg style="left:70.7px;top:267.5px;" width="6" height="9" viewBox="0 0 6 9"><path d="M0.6,0.6 L4.6,4 L0.6,7.4 Z" fill="#f8f8f8" stroke="#222" stroke-width="1"/></svg>
<svg style="left:81.7px;top:266.0px;" width="11" height="11" viewBox="0 0 11 11"><path d="M1,1 H3.8 L4.8,2.2 H9.8 V9.6 H0.6 V1.4 Z" fill="#f9d4aa" stroke="#d4904a" stroke-width="0.9" stroke-linejoin="round"/></svg>
<div class="t" style="left:94.70px;top:267.48px;font-size:9px;line-height:9px;color:#000;font-weight:normal;-webkit-text-stroke:0.2px #000;transform:scaleX(0.8774);transform-origin:0 0;">Timing</div>
<svg style="left:69.7px;top:280px;" width="6" height="6" viewBox="0 0 6 6"><path d="M6,0 V6 H0 Z" fill="#111"/></svg>
<svg style="left:81.7px;top:278.0px;" width="12" height="11" viewBox="0 0 12 11"><path d="M0.6,1.4 H3.8 L4.8,2.4 H9 V4.6 H2.6 L0.6,9.6 Z" fill="#f9d4aa" stroke="#d4904a" stroke-width="0.9" stroke-linejoin="round"/><rect x="2.6" y="2.8" width="6" height="2" fill="#fff"/><path d="M0.6,9.6 L2.6,4.6 H10.8 L8.8,9.6 Z" fill="#f9d4aa" stroke="#d4904a" stroke-width="0.9" stroke-linejoin="round"/></svg>
<div class="t" style="left:94.70px;top:279.48px;font-size:9px;line-height:9px;color:#000;font-weight:normal;-webkit-text-stroke:0.2px #000;transform:scaleX(0.8328);transform-origin:0 0;">Use Case Model</div>
<svg style="left:94.8px;top:289px;" width="12" height="12" viewBox="0 0 12 12"><circle cx="2.8" cy="2.2" r="1.6" fill="none" stroke="#333" stroke-width="0.8"/><path d="M2.8,3.8 V7 M0.6,5.2 H5 M2.8,7 L1.2,10.5 M2.8,7 L4.4,10.5" stroke="#333" stroke-width="0.8"/><ellipse cx="8.5" cy="3" rx="3" ry="2.2" fill="#efe3d6" stroke="#8a8a8a" stroke-width="0.8"/><ellipse cx="8.5" cy="9" rx="3" ry="2.2" fill="#efe3d6" stroke="#8a8a8a" stroke-width="0.8"/></svg>
<div class="t" style="left:107.80px;top:291.48px;font-size:9px;line-height:9px;color:#000;font-weight:normal;-webkit-text-stroke:0.2px #000;transform:scaleX(0.8328);transform-origin:0 0;">Use Case Model</div>
<svg style="left:83.8px;top:303.5px;" width="6" height="9" viewBox="0 0 6 9"><path d="M0.6,0.6 L4.6,4 L0.6,7.4 Z" fill="#f8f8f8" stroke="#222" stroke-width="1"/></svg>
<svg style="left:94.8px;top:302.0px;" width="11" height="11" viewBox="0 0 11 11"><path d="M1,1 H3.8 L4.8,2.2 H9.8 V9.6 H0.6 V1.4 Z" fill="#f9d4aa" stroke="#d4904a" stroke-width="0.9" stroke-linejoin="round"/></svg>
<div class="t" style="left:107.80px;top:303.48px;font-size:9px;line-height:9px;color:#000;font-weight:normal;-webkit-text-stroke:0.2px #000;transform:scaleX(0.8469);transform-origin:0 0;">Actors</div>
<svg style="left:83.8px;top:315.5px;" width="6" height="9" viewBox="0 0 6 9"><path d="M0.6,0.6 L4.6,4 L0.6,7.4 Z" fill="#f8f8f8" stroke="#222" stroke-width="1"/></svg>
<svg style="left:94.8px;top:314.0px;" width="11" height="11" viewBox="0 0 11 11"><path d="M1,1 H3.8 L4.8,2.2 H9.8 V9.6 H0.6 V1.4 Z" fill="#f9d4aa" stroke="#d4904a" stroke-width="0.9" stroke-linejoin="round"/></svg>
<div class="t" style="left:107.80px;top:315.48px;font-size:9px;line-height:9px;color:#000;font-weight:normal;-webkit-text-stroke:0.2px #000;transform:scaleX(0.8646);transform-origin:0 0;">Manage Users</div>
<svg style="left:83.8px;top:327.5px;" width="6" height="9" viewBox="0 0 6 9"><path d="M0.6,0.6 L4.6,4 L0.6,7.4 Z" fill="#f8f8f8" stroke="#222" stroke-width="1"/></svg>
<svg style="left:94.8px;top:326.0px;" width="11" height="11" viewBox="0 0 11 11"><path d="M1,1 H3.8 L4.8,2.2 H9.8 V9.6 H0.6 V1.4 Z" fill="#f9d4aa" stroke="#d4904a" stroke-width="0.9" stroke-linejoin="round"/></svg>
<div class="t" style="left:107.80px;top:327.48px;font-size:9px;line-height:9px;color:#000;font-weight:normal;-webkit-text-stroke:0.2px #000;transform:scaleX(0.8967);transform-origin:0 0;">Manage Inventory</div>
<svg style="left:83.8px;top:339.5px;" width="6" height="9" viewBox="0 0 6 9"><path d="M0.6,0.6 L4.6,4 L0.6,7.4 Z" fill="#f8f8f8" stroke="#222" stroke-width="1"/></svg>
<svg style="left:94.8px;top:338.0px;" width="11" height="11" viewBox="0 0 11 11"><path d="M1,1 H3.8 L4.8,2.2 H9.8 V9.6 H0.6 V1.4 Z" fill="#f9d4aa" stroke="#d4904a" stroke-width="0.9" stroke-linejoin="round"/></svg>
<div class="t" style="left:107.80px;top:339.48px;font-size:9px;line-height:9px;color:#000;font-weight:normal;-webkit-text-stroke:0.2px #000;transform:scaleX(0.8977);transform-origin:0 0;">Take Orders</div>
<svg style="left:82.8px;top:352px;" width="6" height="6" viewBox="0 0 6 6"><path d="M6,0 V6 H0 Z" fill="#111"/></svg>
<svg style="left:94.8px;top:350.0px;" width="12" height="11" viewBox="0 0 12 11"><path d="M0.6,1.4 H3.8 L4.8,2.4 H9 V4.6 H2.6 L0.6,9.6 Z" fill="#f9d4aa" stroke="#d4904a" stroke-width="0.9" stroke-linejoin="round"/><rect x="2.6" y="2.8" width="6" height="2" fill="#fff"/><path d="M0.6,9.6 L2.6,4.6 H10.8 L8.8,9.6 Z" fill="#f9d4aa" stroke="#d4904a" stroke-width="0.9" stroke-linejoin="round"/></svg>
<div class="t" style="left:107.80px;top:351.48px;font-size:9px;line-height:9px;color:#000;font-weight:normal;-webkit-text-stroke:0.2px #000;transform:scaleX(0.8882);transform-origin:0 0;">Fulfill Orders</div>
<svg style="left:108px;top:361px;" width="12" height="12" viewBox="0 0 12 12"><circle cx="2.8" cy="2.2" r="1.6" fill="none" stroke="#333" stroke-width="0.8"/><path d="M2.8,3.8 V7 M0.6,5.2 H5 M2.8,7 L1.2,10.5 M2.8,7 L4.4,10.5" stroke="#333" stroke-width="0.8"/><ellipse cx="8.5" cy="3" rx="3" ry="2.2" fill="#efe3d6" stroke="#8a8a8a" stroke-width="0.8"/><ellipse cx="8.5" cy="9" rx="3" ry="2.2" fill="#efe3d6" stroke="#8a8a8a" stroke-width="0.8"/></svg>
<div class="t" style="left:121.00px;top:363.48px;font-size:9px;line-height:9px;color:#000;font-weight:normal;-webkit-text-stroke:0.2px #000;transform:scaleX(0.8412);transform-origin:0 0;">Deliver Books</div>
<svg style="left:110px;top:375px;" width="10" height="8" viewBox="0 0 10 8"><ellipse cx="5.0" cy="4.0" rx="4.5" ry="3.5" fill="#8fb0f4" stroke="#2f4fb0" stroke-width="1"/></svg>
<div class="t" style="left:121.00px;top:375.48px;font-size:9px;line-height:9px;color:#000;font-weight:normal;-webkit-text-stroke:0.2px #000;transform:scaleX(0.8717);transform-origin:0 0;">List Current Orders</div>
<svg style="left:110px;top:387px;" width="10" height="8" viewBox="0 0 10 8"><ellipse cx="5.0" cy="4.0" rx="4.5" ry="3.5" fill="#8fb0f4" stroke="#2f4fb0" stroke-width="1"/></svg>
<div class="t" style="left:121.00px;top:387.48px;font-size:9px;line-height:9px;color:#000;font-weight:normal;-webkit-text-stroke:0.2px #000;transform:scaleX(0.8806);transform-origin:0 0;">Package Order</div>
<div style="left:120px;top:398px;width:52px;height:11px;background:#bcbcbc;"></div>
<svg style="left:97px;top:399.5px;" width="6" height="9" viewBox="0 0 6 9"><path d="M0.6,0.6 L4.6,4 L0.6,7.4 Z" fill="#f8f8f8" stroke="#222" stroke-width="1"/></svg>
<svg style="left:110px;top:399px;" width="10" height="8" viewBox="0 0 10 8"><ellipse cx="5.0" cy="4.0" rx="4.5" ry="3.5" fill="#8fb0f4" stroke="#2f4fb0" stroke-width="1"/></svg>
<div class="t" style="left:121.00px;top:399.48px;font-size:9px;line-height:9px;color:#000;font-weight:normal;-webkit-text-stroke:0.2px #000;transform:scaleX(0.8326);transform-origin:0 0;">Process Order</div>
<svg style="left:110px;top:411px;" width="10" height="8" viewBox="0 0 10 8"><ellipse cx="5.0" cy="4.0" rx="4.5" ry="3.5" fill="#8fb0f4" stroke="#2f4fb0" stroke-width="1"/></svg>
<div class="t" style="left:121.00px;top:411.48px;font-size:9px;line-height:9px;color:#000;font-weight:normal;-webkit-text-stroke:0.2px #000;transform:scaleX(0.8571);transform-origin:0 0;">Ship Order</div>
<svg style="left:83.8px;top:423.5px;" width="6" height="9" viewBox="0 0 6 9"><path d="M0.6,0.6 L4.6,4 L0.6,7.4 Z" fill="#f8f8f8" stroke="#222" stroke-width="1"/></svg>
<svg style="left:94.8px;top:422.0px;" width="11" height="11" viewBox="0 0 11 11"><path d="M1,1 H3.8 L4.8,2.2 H9.8 V9.6 H0.6 V1.4 Z" fill="#f9d4aa" stroke="#d4904a" stroke-width="0.9" stroke-linejoin="round"/></svg>
<div class="t" style="left:107.80px;top:423.48px;font-size:9px;line-height:9px;color:#000;font-weight:normal;-webkit-text-stroke:0.2px #000;transform:scaleX(0.8400);transform-origin:0 0;">General Process</div>
<svg style="left:43.7px;top:435.5px;" width="6" height="9" viewBox="0 0 6 9"><path d="M0.6,0.6 L4.6,4 L0.6,7.4 Z" fill="#f8f8f8" stroke="#222" stroke-width="1"/></svg>
<svg style="left:55.7px;top:434px;" width="10" height="10" viewBox="0 0 10 10"><rect x="0.5" y="0.5" width="9" height="9" fill="#f4c89a" stroke="#d08a40"/><rect x="2.5" y="2" width="5" height="6" fill="#c8daf4"/><path d="M5,2.5 V7.5" stroke="#fff"/></svg>
<div class="t" style="left:67.70px;top:435.48px;font-size:9px;line-height:9px;color:#000;font-weight:normal;-webkit-text-stroke:0.2px #000;transform:scaleX(0.8679);transform-origin:0 0;">Domain Specific Modeling</div>
<svg style="left:43.7px;top:447.5px;" width="6" height="9" viewBox="0 0 6 9"><path d="M0.6,0.6 L4.6,4 L0.6,7.4 Z" fill="#f8f8f8" stroke="#222" stroke-width="1"/></svg>
<svg style="left:55.7px;top:446px;" width="10" height="10" viewBox="0 0 10 10"><rect x="0.5" y="0.5" width="9" height="9" fill="#f4c89a" stroke="#d08a40"/><rect x="2.5" y="2" width="5" height="6" fill="#c8daf4"/><path d="M5,2.5 V7.5" stroke="#fff"/></svg>
<div class="t" style="left:67.70px;top:447.48px;font-size:9px;line-height:9px;color:#000;font-weight:normal;-webkit-text-stroke:0.2px #000;transform:scaleX(0.8835);transform-origin:0 0;">Navigate, Search &amp; Trace</div>
<svg style="left:43.7px;top:459.5px;" width="6" height="9" viewBox="0 0 6 9"><path d="M0.6,0.6 L4.6,4 L0.6,7.4 Z" fill="#f8f8f8" stroke="#222" stroke-width="1"/></svg>
<svg style="left:55.7px;top:458px;" width="10" height="10" viewBox="0 0 10 10"><rect x="0.5" y="0.5" width="9" height="9" fill="#f4c89a" stroke="#d08a40"/><rect x="2.5" y="2" width="5" height="6" fill="#c8daf4"/><path d="M5,2.5 V7.5" stroke="#fff"/></svg>
<div class="t" style="left:67.70px;top:459.48px;font-size:9px;line-height:9px;color:#000;font-weight:normal;-webkit-text-stroke:0.2px #000;transform:scaleX(0.8787);transform-origin:0 0;">Projects and Teams</div>
<svg style="left:43.7px;top:471.5px;" width="6" height="9" viewBox="0 0 6 9"><path d="M0.6,0.6 L4.6,4 L0.6,7.4 Z" fill="#f8f8f8" stroke="#222" stroke-width="1"/></svg>
<svg style="left:55.7px;top:470px;" width="10" height="10" viewBox="0 0 10 10"><rect x="0.5" y="0.5" width="9" height="9" fill="#f4c89a" stroke="#d08a40"/><rect x="2.5" y="2" width="5" height="6" fill="#c8daf4"/><path d="M5,2.5 V7.5" stroke="#fff"/></svg>
<div class="t" style="left:67.70px;top:471.48px;font-size:9px;line-height:9px;color:#000;font-weight:normal;-webkit-text-stroke:0.2px #000;transform:scaleX(0.9329);transform-origin:0 0;">Testing</div>
<svg style="left:43.7px;top:483.5px;" width="6" height="9" viewBox="0 0 6 9"><path d="M0.6,0.6 L4.6,4 L0.6,7.4 Z" fill="#f8f8f8" stroke="#222" stroke-width="1"/></svg>
<svg style="left:55.7px;top:482px;" width="10" height="10" viewBox="0 0 10 10"><rect x="0.5" y="0.5" width="9" height="9" fill="#f4c89a" stroke="#d08a40"/><rect x="2.5" y="2" width="5" height="6" fill="#c8daf4"/><path d="M5,2.5 V7.5" stroke="#fff"/></svg>
<div class="t" style="left:67.70px;top:483.48px;font-size:9px;line-height:9px;color:#000;font-weight:normal;-webkit-text-stroke:0.2px #000;transform:scaleX(0.9179);transform-origin:0 0;">Maintenance</div>
<svg style="left:43.7px;top:495.5px;" width="6" height="9" viewBox="0 0 6 9"><path d="M0.6,0.6 L4.6,4 L0.6,7.4 Z" fill="#f8f8f8" stroke="#222" stroke-width="1"/></svg>
<svg style="left:55.7px;top:494px;" width="10" height="10" viewBox="0 0 10 10"><rect x="0.5" y="0.5" width="9" height="9" fill="#f4c89a" stroke="#d08a40"/><rect x="2.5" y="2" width="5" height="6" fill="#c8daf4"/><path d="M5,2.5 V7.5" stroke="#fff"/></svg>
<div class="t" style="left:67.70px;top:495.48px;font-size:9px;line-height:9px;color:#000;font-weight:normal;-webkit-text-stroke:0.2px #000;transform:scaleX(0.8790);transform-origin:0 0;">Reporting</div>
<svg style="left:43.7px;top:507.5px;" width="6" height="9" viewBox="0 0 6 9"><path d="M0.6,0.6 L4.6,4 L0.6,7.4 Z" fill="#f8f8f8" stroke="#222" stroke-width="1"/></svg>
<svg style="left:55.7px;top:506px;" width="10" height="10" viewBox="0 0 10 10"><rect x="0.5" y="0.5" width="9" height="9" fill="#f4c89a" stroke="#d08a40"/><rect x="2.5" y="2" width="5" height="6" fill="#c8daf4"/><path d="M5,2.5 V7.5" stroke="#fff"/></svg>
<div class="t" style="left:67.70px;top:507.48px;font-size:9px;line-height:9px;color:#000;font-weight:normal;-webkit-text-stroke:0.2px #000;transform:scaleX(0.8786);transform-origin:0 0;">Automation</div></div></div>
<svg style="left:918.4px;top:136px;" width="6" height="6" viewBox="0 0 6 6"><path d="M6,0 V6 H0 Z" fill="#111"/></svg>
<svg style="left:929.4px;top:135px;" width="11" height="8" viewBox="0 0 11 8"><ellipse cx="5.5" cy="4.0" rx="5.0" ry="3.5" fill="#8fb0f4" stroke="#2f4fb0" stroke-width="1"/></svg>
<div class="t" style="left:941.40px;top:135.68px;font-size:9px;line-height:9px;color:#000;font-weight:normal;-webkit-text-stroke:0.2px #000;transform:scaleX(0.8274);transform-origin:0 0;">Process Order</div>
<svg style="left:931.3px;top:148px;" width="6" height="6" viewBox="0 0 6 6"><path d="M6,0 V6 H0 Z" fill="#111"/></svg>
<svg style="left:942.3px;top:145px;" width="12" height="12" viewBox="0 0 12 12"><path d="M3,1 H5 V11 H3" stroke="#2050c0" fill="none"/><rect x="4.5" y="3.5" width="5" height="5" fill="#e8e020" stroke="#555" stroke-width="0.6"/><path d="M9.5,6 H12" stroke="#2050c0"/></svg>
<div class="t" style="left:954.30px;top:147.68px;font-size:9px;line-height:9px;color:#000;font-weight:normal;-webkit-text-stroke:0.2px #000;transform:scaleX(0.8558);transform-origin:0 0;">embeds</div>
<svg style="left:944.6px;top:159.7px;" width="6" height="9" viewBox="0 0 6 9"><path d="M0.6,0.6 L4.6,4 L0.6,7.4 Z" fill="#f8f8f8" stroke="#222" stroke-width="1"/></svg>
<svg style="left:954.6px;top:158px;" width="10" height="10" viewBox="0 0 10 10"><circle cx="5" cy="5" r="4" fill="#eee" stroke="#333" stroke-width="0.9"/><path d="M3,3 L7,7 M7,3 L3,7" stroke="#333" stroke-width="0.9"/></svg>
<svg style="left:931.3px;top:172px;" width="6" height="6" viewBox="0 0 6 6"><path d="M6,0 V6 H0 Z" fill="#111"/></svg>
<svg style="left:942.3px;top:171px;" width="12" height="8" viewBox="0 0 12 8"><path d="M11,4 H4 M4,2 L1,4 L4,6 Z" stroke="#3a60c0" stroke-width="0.9" fill="#fff"/></svg>
<div class="t" style="left:954.30px;top:171.68px;font-size:9px;line-height:9px;color:#000;font-weight:normal;-webkit-text-stroke:0.2px #000;transform:scaleX(0.8330);transform-origin:0 0;">owns</div>
<svg style="left:944.6px;top:183.7px;" width="6" height="9" viewBox="0 0 6 9"><path d="M0.6,0.6 L4.6,4 L0.6,7.4 Z" fill="#f8f8f8" stroke="#222" stroke-width="1"/></svg>
<svg style="left:955.4px;top:183.1px;" width="12" height="8" viewBox="0 0 12 8"><rect x="0.5" y="0.5" width="10" height="6.2" rx="3" fill="#f6c860" stroke="#8a6a20" stroke-width="0.8"/></svg>
<div class="t" style="left:966.60px;top:183.68px;font-size:9px;line-height:9px;color:#000;font-weight:normal;-webkit-text-stroke:0.2px #000;transform:scaleX(0.8771);transform-origin:0 0;">Accept Order</div>
<svg style="left:944.6px;top:195.7px;" width="6" height="9" viewBox="0 0 6 9"><path d="M0.6,0.6 L4.6,4 L0.6,7.4 Z" fill="#f8f8f8" stroke="#222" stroke-width="1"/></svg>
<svg style="left:955.4px;top:195.1px;" width="12" height="8" viewBox="0 0 12 8"><rect x="0.5" y="0.5" width="10" height="6.2" rx="3" fill="#f6c860" stroke="#8a6a20" stroke-width="0.8"/></svg>
<div class="t" style="left:966.60px;top:195.68px;font-size:9px;line-height:9px;color:#000;font-weight:normal;-webkit-text-stroke:0.2px #000;transform:scaleX(0.8745);transform-origin:0 0;">Cancel Order</div>
<svg style="left:944.6px;top:207.7px;" width="6" height="9" viewBox="0 0 6 9"><path d="M0.6,0.6 L4.6,4 L0.6,7.4 Z" fill="#f8f8f8" stroke="#222" stroke-width="1"/></svg>
<svg style="left:955.4px;top:207.1px;" width="12" height="8" viewBox="0 0 12 8"><rect x="0.5" y="0.5" width="10" height="6.2" rx="3" fill="#f6c860" stroke="#8a6a20" stroke-width="0.8"/></svg>
<div class="t" style="left:966.60px;top:207.68px;font-size:9px;line-height:9px;color:#000;font-weight:normal;-webkit-text-stroke:0.2px #000;transform:scaleX(0.8619);transform-origin:0 0;">Check Credit Card</div>
<svg style="left:944.6px;top:219.7px;" width="6" height="9" viewBox="0 0 6 9"><path d="M0.6,0.6 L4.6,4 L0.6,7.4 Z" fill="#f8f8f8" stroke="#222" stroke-width="1"/></svg>
<svg style="left:955.4px;top:219.1px;" width="12" height="8" viewBox="0 0 12 8"><rect x="0.5" y="0.5" width="10" height="6.2" rx="3" fill="#f6c860" stroke="#8a6a20" stroke-width="0.8"/></svg>
<div class="t" style="left:966.60px;top:219.68px;font-size:9px;line-height:9px;color:#000;font-weight:normal;-webkit-text-stroke:0.2px #000;transform:scaleX(0.8433);transform-origin:0 0;">Check Stock</div>
<svg style="left:944.6px;top:231.7px;" width="6" height="9" viewBox="0 0 6 9"><path d="M0.6,0.6 L4.6,4 L0.6,7.4 Z" fill="#f8f8f8" stroke="#222" stroke-width="1"/></svg>
<svg style="left:955.4px;top:231.1px;" width="12" height="8" viewBox="0 0 12 8"><rect x="0.5" y="0.5" width="10" height="6.2" rx="3" fill="#f6c860" stroke="#8a6a20" stroke-width="0.8"/></svg>
<div class="t" style="left:966.60px;top:231.68px;font-size:9px;line-height:9px;color:#000;font-weight:normal;-webkit-text-stroke:0.2px #000;transform:scaleX(0.8208);transform-origin:0 0;">Deliver Goods</div>
<svg style="left:944.6px;top:243.7px;" width="6" height="9" viewBox="0 0 6 9"><path d="M0.6,0.6 L4.6,4 L0.6,7.4 Z" fill="#f8f8f8" stroke="#222" stroke-width="1"/></svg>
<svg style="left:955.4px;top:243.1px;" width="12" height="8" viewBox="0 0 12 8"><rect x="0.5" y="0.5" width="10" height="6.2" rx="3" fill="#f6c860" stroke="#8a6a20" stroke-width="0.8"/></svg>
<div class="t" style="left:966.60px;top:243.68px;font-size:9px;line-height:9px;color:#000;font-weight:normal;-webkit-text-stroke:0.2px #000;transform:scaleX(0.8343);transform-origin:0 0;">Process Credit Card</div>
<svg style="left:944.6px;top:255.7px;" width="6" height="9" viewBox="0 0 6 9"><path d="M0.6,0.6 L4.6,4 L0.6,7.4 Z" fill="#f8f8f8" stroke="#222" stroke-width="1"/></svg>
<svg style="left:955.4px;top:255.1px;" width="12" height="8" viewBox="0 0 12 8"><rect x="0.5" y="0.5" width="10" height="6.2" rx="3" fill="#f6c860" stroke="#8a6a20" stroke-width="0.8"/></svg>
<div class="t" style="left:966.60px;top:255.68px;font-size:9px;line-height:9px;color:#000;font-weight:normal;-webkit-text-stroke:0.2px #000;transform:scaleX(0.8982);transform-origin:0 0;">StaffContactClient</div>
<svg style="left:944.6px;top:267.7px;" width="6" height="9" viewBox="0 0 6 9"><path d="M0.6,0.6 L4.6,4 L0.6,7.4 Z" fill="#f8f8f8" stroke="#222" stroke-width="1"/></svg>
<svg style="left:954.6px;top:266px;" width="10" height="10" viewBox="0 0 10 10"><circle cx="5" cy="5" r="4" fill="#fff" stroke="#222" stroke-width="1"/><circle cx="5" cy="5" r="2.2" fill="#111"/></svg>
<svg style="left:944.6px;top:279.7px;" width="6" height="9" viewBox="0 0 6 9"><path d="M0.6,0.6 L4.6,4 L0.6,7.4 Z" fill="#f8f8f8" stroke="#222" stroke-width="1"/></svg>
<svg style="left:954.6px;top:278px;" width="10" height="10" viewBox="0 0 10 10"><circle cx="5" cy="5" r="4" fill="#fff" stroke="#222" stroke-width="1"/><circle cx="5" cy="5" r="2.2" fill="#111"/></svg>
<svg style="left:944.6px;top:291.7px;" width="6" height="9" viewBox="0 0 6 9"><path d="M0.6,0.6 L4.6,4 L0.6,7.4 Z" fill="#f8f8f8" stroke="#222" stroke-width="1"/></svg>
<svg style="left:955.4px;top:291.09999999999997px;" width="12" height="9" viewBox="0 0 12 9"><rect x="0.5" y="0.5" width="10" height="6.8" fill="#fff" stroke="#666" stroke-width="0.7"/><rect x="1.3" y="1.6" width="2.6" height="2.6" fill="#3a70d0"/><path d="M4.5,2 H10 M4.5,4 H10 M1,5.8 H10" stroke="#777" stroke-width="0.6"/></svg>
<div class="t" style="left:966.60px;top:291.68px;font-size:9px;line-height:9px;color:#000;font-weight:normal;-webkit-text-stroke:0.2px #000;transform:scaleX(0.8825);transform-origin:0 0;">Order</div>
<svg style="left:944.6px;top:303.7px;" width="6" height="9" viewBox="0 0 6 9"><path d="M0.6,0.6 L4.6,4 L0.6,7.4 Z" fill="#f8f8f8" stroke="#222" stroke-width="1"/></svg>
<svg style="left:955.4px;top:303.09999999999997px;" width="12" height="9" viewBox="0 0 12 9"><rect x="0.5" y="0.5" width="10" height="6.8" fill="#fff" stroke="#666" stroke-width="0.7"/><rect x="1.3" y="1.6" width="2.6" height="2.6" fill="#3a70d0"/><path d="M4.5,2 H10 M4.5,4 H10 M1,5.8 H10" stroke="#777" stroke-width="0.6"/></svg>
<div class="t" style="left:966.60px;top:303.68px;font-size:9px;line-height:9px;color:#000;font-weight:normal;-webkit-text-stroke:0.2px #000;transform:scaleX(0.8932);transform-origin:0 0;">Transaction</div>
<svg style="left:944.6px;top:315.7px;" width="6" height="9" viewBox="0 0 6 9"><path d="M0.6,0.6 L4.6,4 L0.6,7.4 Z" fill="#f8f8f8" stroke="#222" stroke-width="1"/></svg>
<svg style="left:954.6px;top:314px;" width="11" height="11" viewBox="0 0 11 11"><path d="M5.5,0.5 L10.5,5.5 L5.5,10.5 L0.5,5.5 Z" fill="#40d0d0" stroke="#208080" stroke-width="0.8"/></svg>
<div class="t" style="left:966.60px;top:315.68px;font-size:9px;line-height:9px;color:#000;font-weight:normal;-webkit-text-stroke:0.2px #000;transform:scaleX(0.8607);transform-origin:0 0;">Stock Available?</div>
<svg style="left:944.6px;top:327.7px;" width="6" height="9" viewBox="0 0 6 9"><path d="M0.6,0.6 L4.6,4 L0.6,7.4 Z" fill="#f8f8f8" stroke="#222" stroke-width="1"/></svg>
<svg style="left:954.6px;top:326px;" width="11" height="11" viewBox="0 0 11 11"><path d="M5.5,0.5 L10.5,5.5 L5.5,10.5 L0.5,5.5 Z" fill="#40d0d0" stroke="#208080" stroke-width="0.8"/></svg>
<div class="t" style="left:966.60px;top:327.68px;font-size:9px;line-height:9px;color:#000;font-weight:normal;-webkit-text-stroke:0.2px #000;transform:scaleX(0.8550);transform-origin:0 0;">Valid Card?</div>
<svg style="left:931.3px;top:340px;" width="6" height="6" viewBox="0 0 6 6"><path d="M6,0 V6 H0 Z" fill="#111"/></svg>
<svg style="left:942.3px;top:339px;" width="12" height="8" viewBox="0 0 12 8"><path d="M0,4 H2 M3.5,4 H5.5 M7,4 H11 M9,1.5 V6.5" stroke="#3a60c0" stroke-width="1" fill="none"/></svg>
<div class="t" style="left:954.30px;top:339.68px;font-size:9px;line-height:9px;color:#000;font-weight:normal;-webkit-text-stroke:0.2px #000;transform:scaleX(0.8550);transform-origin:0 0;">implements</div>
<svg style="left:944.6px;top:351.7px;" width="6" height="9" viewBox="0 0 6 9"><path d="M0.6,0.6 L4.6,4 L0.6,7.4 Z" fill="#f8f8f8" stroke="#222" stroke-width="1"/></svg>
<svg style="left:955.6px;top:350.2px;" width="10" height="11" viewBox="0 0 10 11"><rect x="0.5" y="0.5" width="8" height="9.5" rx="1" fill="#dfe8f4" stroke="#5a7ad0" stroke-width="0.9"/><rect x="1.3" y="1.5" width="6.4" height="1.6" fill="#fff"/><path d="M1.3,4.6 H7.7" stroke="#f0a070" stroke-width="1"/><path d="M1.3,7.2 H7.7" stroke="#b0c090" stroke-width="1.4"/></svg>
<div class="t" style="left:966.60px;top:351.68px;font-size:9px;line-height:9px;color:#000;font-weight:normal;-webkit-text-stroke:0.2px #000;transform:scaleX(0.8825);transform-origin:0 0;">Order</div>
<svg style="left:944.6px;top:363.7px;" width="6" height="9" viewBox="0 0 6 9"><path d="M0.6,0.6 L4.6,4 L0.6,7.4 Z" fill="#f8f8f8" stroke="#222" stroke-width="1"/></svg>
<svg style="left:955.1px;top:362.9px;" width="11" height="9" viewBox="0 0 11 9"><rect x="0.5" y="0.5" width="9.2" height="6.8" rx="1" fill="#fff" stroke="#555" stroke-width="0.9"/><rect x="1.2" y="1.2" width="1.4" height="5.4" fill="#e04080"/><path d="M4.3,4.6 L5.4,5.6 L7.8,2.8" stroke="#109090" stroke-width="1.1" fill="none"/></svg>
<div class="t" style="left:966.60px;top:363.68px;font-size:9px;line-height:9px;color:#000;font-weight:normal;-webkit-text-stroke:0.2px #000;transform:scaleX(0.8214);transform-origin:0 0;">REQ015 - Process Credit Card Payment</div>
<svg style="left:944.6px;top:375.7px;" width="6" height="9" viewBox="0 0 6 9"><path d="M0.6,0.6 L4.6,4 L0.6,7.4 Z" fill="#f8f8f8" stroke="#222" stroke-width="1"/></svg>
<svg style="left:955.1px;top:374.9px;" width="11" height="9" viewBox="0 0 11 9"><rect x="0.5" y="0.5" width="9.2" height="6.8" rx="1" fill="#fff" stroke="#555" stroke-width="0.9"/><rect x="1.2" y="1.2" width="1.4" height="5.4" fill="#e04080"/><path d="M4.3,4.6 L5.4,5.6 L7.8,2.8" stroke="#109090" stroke-width="1.1" fill="none"/></svg>
<div class="t" style="left:966.60px;top:375.68px;font-size:9px;line-height:9px;color:#000;font-weight:normal;-webkit-text-stroke:0.2px #000;transform:scaleX(0.8132);transform-origin:0 0;">REQ033 - Retrieve Books</div>
<svg style="left:944.6px;top:387.7px;" width="6" height="9" viewBox="0 0 6 9"><path d="M0.6,0.6 L4.6,4 L0.6,7.4 Z" fill="#f8f8f8" stroke="#222" stroke-width="1"/></svg>
<svg style="left:955.1px;top:386.9px;" width="11" height="9" viewBox="0 0 11 9"><rect x="0.5" y="0.5" width="9.2" height="6.8" rx="1" fill="#fff" stroke="#555" stroke-width="0.9"/><rect x="1.2" y="1.2" width="1.4" height="5.4" fill="#e04080"/><path d="M4.3,4.6 L5.4,5.6 L7.8,2.8" stroke="#109090" stroke-width="1.1" fill="none"/></svg>
<div class="t" style="left:966.60px;top:387.68px;font-size:9px;line-height:9px;color:#000;font-weight:normal;-webkit-text-stroke:0.2px #000;transform:scaleX(0.8546);transform-origin:0 0;">REQ102 - System must be able to cope with regular retail sales</div>
<svg style="left:944.6px;top:399.7px;" width="6" height="9" viewBox="0 0 6 9"><path d="M0.6,0.6 L4.6,4 L0.6,7.4 Z" fill="#f8f8f8" stroke="#222" stroke-width="1"/></svg>
<svg style="left:955.1px;top:398.9px;" width="11" height="9" viewBox="0 0 11 9"><rect x="0.5" y="0.5" width="9.2" height="6.8" rx="1" fill="#fff" stroke="#555" stroke-width="0.9"/><rect x="1.2" y="1.2" width="1.4" height="5.4" fill="#e04080"/><path d="M4.3,4.6 L5.4,5.6 L7.8,2.8" stroke="#109090" stroke-width="1.1" fill="none"/></svg>
<div class="t" style="left:966.60px;top:399.68px;font-size:9px;line-height:9px;color:#000;font-weight:normal;-webkit-text-stroke:0.2px #000;transform:scaleX(0.8637);transform-origin:0 0;">REQ104 - Non storage of customer credit card details</div>
<svg style="left:944.6px;top:411.7px;" width="6" height="9" viewBox="0 0 6 9"><path d="M0.6,0.6 L4.6,4 L0.6,7.4 Z" fill="#f8f8f8" stroke="#222" stroke-width="1"/></svg>
<svg style="left:955.1px;top:410.9px;" width="11" height="9" viewBox="0 0 11 9"><rect x="0.5" y="0.5" width="9.2" height="6.8" rx="1" fill="#fff" stroke="#555" stroke-width="0.9"/><rect x="1.2" y="1.2" width="1.4" height="5.4" fill="#e04080"/><path d="M4.3,4.6 L5.4,5.6 L7.8,2.8" stroke="#109090" stroke-width="1.1" fill="none"/></svg>
<div class="t" style="left:966.60px;top:411.68px;font-size:9px;line-height:9px;color:#000;font-weight:normal;-webkit-text-stroke:0.2px #000;transform:scaleX(0.8513);transform-origin:0 0;">REQ106 - Retrieval of historic information.</div>
<svg style="left:944.6px;top:423.7px;" width="6" height="9" viewBox="0 0 6 9"><path d="M0.6,0.6 L4.6,4 L0.6,7.4 Z" fill="#f8f8f8" stroke="#222" stroke-width="1"/></svg>
<svg style="left:955.1px;top:422.9px;" width="11" height="9" viewBox="0 0 11 9"><rect x="0.5" y="0.5" width="9.2" height="6.8" rx="1" fill="#fff" stroke="#555" stroke-width="0.9"/><rect x="1.2" y="1.2" width="1.4" height="5.4" fill="#e04080"/><path d="M4.3,4.6 L5.4,5.6 L7.8,2.8" stroke="#109090" stroke-width="1.1" fill="none"/></svg>
<div class="t" style="left:966.60px;top:423.68px;font-size:9px;line-height:9px;color:#000;font-weight:normal;-webkit-text-stroke:0.2px #000;transform:scaleX(0.8807);transform-origin:0 0;">Passing on of roles leading to inefficiency and extra costs.</div>
<svg style="left:944.6px;top:435.7px;" width="6" height="9" viewBox="0 0 6 9"><path d="M0.6,0.6 L4.6,4 L0.6,7.4 Z" fill="#f8f8f8" stroke="#222" stroke-width="1"/></svg>
<svg style="left:955.1px;top:434.9px;" width="11" height="9" viewBox="0 0 11 9"><rect x="0.5" y="0.5" width="9.2" height="6.8" rx="1" fill="#fff" stroke="#555" stroke-width="0.9"/><rect x="1.2" y="1.2" width="1.4" height="5.4" fill="#e04080"/><path d="M4.3,4.6 L5.4,5.6 L7.8,2.8" stroke="#109090" stroke-width="1.1" fill="none"/></svg>
<div class="t" style="left:966.60px;top:435.68px;font-size:9px;line-height:9px;color:#000;font-weight:normal;-webkit-text-stroke:0.2px #000;transform:scaleX(0.8719);transform-origin:0 0;">Reduce wasted time sending messages to customers</div>
<svg style="left:931.3px;top:448px;" width="6" height="6" viewBox="0 0 6 6"><path d="M6,0 V6 H0 Z" fill="#111"/></svg>
<svg style="left:942.3px;top:447px;" width="12" height="8" viewBox="0 0 12 8"><path d="M11,4 H2 M5,1 L1.5,4 L5,7" stroke="#3a60c0" stroke-width="1.3" fill="none"/></svg>
<div class="t" style="left:954.30px;top:447.68px;font-size:9px;line-height:9px;color:#000;font-weight:normal;-webkit-text-stroke:0.2px #000;transform:scaleX(0.8433);transform-origin:0 0;">Association from</div>
<svg style="left:944.6px;top:459.7px;" width="6" height="9" viewBox="0 0 6 9"><path d="M0.6,0.6 L4.6,4 L0.6,7.4 Z" fill="#f8f8f8" stroke="#222" stroke-width="1"/></svg>
<svg style="left:954.6px;top:457px;" width="10" height="12" viewBox="0 0 10 12"><circle cx="5" cy="2.3" r="1.8" fill="#fff" stroke="#222" stroke-width="0.9"/><path d="M5,4 V7.5 M1.5,5.5 H8.5 M5,7.5 L2,11.5 M5,7.5 L8,11.5" stroke="#222" stroke-width="0.9"/></svg>
<div class="t" style="left:966.60px;top:459.68px;font-size:9px;line-height:9px;color:#000;font-weight:normal;-webkit-text-stroke:0.2px #000;transform:scaleX(0.8412);transform-origin:0 0;">Storeroom Worker</div>
<svg style="left:931.3px;top:472px;" width="6" height="6" viewBox="0 0 6 6"><path d="M6,0 V6 H0 Z" fill="#111"/></svg>
<svg style="left:942.3px;top:471px;" width="12" height="8" viewBox="0 0 12 8"><path d="M0,2.5 H8 M0,5.5 H8 M7,0.5 L11,4 L7,7.5" stroke="#3a60c0" stroke-width="1.2" fill="none"/></svg>
<div class="t" style="left:954.30px;top:471.68px;font-size:9px;line-height:9px;color:#000;font-weight:normal;-webkit-text-stroke:0.2px #000;transform:scaleX(0.8231);transform-origin:0 0;">UseCase to</div>
<svg style="left:944.6px;top:483.7px;" width="6" height="9" viewBox="0 0 6 9"><path d="M0.6,0.6 L4.6,4 L0.6,7.4 Z" fill="#f8f8f8" stroke="#222" stroke-width="1"/></svg>
<svg style="left:954.6px;top:483px;" width="11" height="8" viewBox="0 0 11 8"><ellipse cx="5.5" cy="4.0" rx="5.0" ry="3.5" fill="#8fb0f4" stroke="#2f4fb0" stroke-width="1"/></svg>
<div class="t" style="left:966.60px;top:483.68px;font-size:9px;line-height:9px;color:#000;font-weight:normal;-webkit-text-stroke:0.2px #000;transform:scaleX(0.8690);transform-origin:0 0;">Package Order</div>
<svg style="left:0px;top:0px;" width="1310" height="140" viewBox="0 0 1310 140"><circle cx="922.3" cy="126.3" r="2" fill="#f0f4ff" stroke="#1a2a80" stroke-width="1.1"/><circle cx="927.3" cy="126.3" r="2" fill="#f0f4ff" stroke="#1a2a80" stroke-width="1.1"/><path d="M924.3,126 H925.3 M920.5,124.5 L923,121.5 L924.5,122.5 M925.8,124.5 L928.5,121.5 L930.8,123.5" stroke="#1a2a80" stroke-width="1" fill="none"/><rect x="934.5" y="121.5" width="9.8" height="7.8" fill="#cfe0f8" stroke="#3a7ae0" stroke-width="1"/><rect x="937" y="126" width="4" height="2" fill="#6a7aa0"/><path d="M935,124.5 L938.5,121.5 L942.5,121 L944,120" stroke="#8a8a10" stroke-width="2" fill="none"/><rect x="944" y="120" width="1.4" height="4.5" fill="#111"/><rect x="949.5" y="120.5" width="10.5" height="8.8" fill="#e8f0ff" stroke="#10206a" stroke-width="1.1"/><path d="M950,122 L958,129 M950,125.5 L954,129 M953.5,121 L959.5,126.5 M957,121 L959.5,123.3" stroke="#4a7ad0" stroke-width="1.1"/><rect x="950" y="129" width="2" height="1.3" fill="#10206a"/><rect x="956" y="129" width="2" height="1.3" fill="#10206a"/><rect x="964.6" y="118" width="1" height="14" fill="#9e9e9e"/><rect x="972" y="121" width="2" height="2" fill="#9ac8f0"/><rect x="972" y="124.5" width="2" height="2" fill="#9ac8f0"/><rect x="972" y="128" width="2" height="2" fill="#9ac8f0"/><path d="M975.5,122 L976.8,123.2 L979.5,120.5 M976,125.8 H978 M975.5,129 L976.8,130 L979.5,127.5" stroke="#111" stroke-width="1.1" fill="none"/><path d="M985,125 H989 L987,127 Z" fill="#111"/><circle cx="998.3" cy="125.5" r="5.2" fill="#8a9ae8" stroke="#2a3ab0" stroke-width="0.9"/><circle cx="998.3" cy="125.5" r="3.6" fill="#b8c4f4" stroke="#f0f0ff" stroke-width="0.6"/><text x="996.6" y="128" font-family="Liberation Sans" font-size="6.5" fill="#2a3ab0">?</text></svg>
<svg style="left:0px;top:0px;left:0;top:0;" width="1310" height="750" viewBox="0 0 1310 750"><defs><linearGradient id="ucg" x1="0" y1="0" x2="1" y2="0"><stop offset="0" stop-color="#eef5fd"/><stop offset="1" stop-color="#c3dcf6"/></linearGradient><radialGradient id="head" cx="0.4" cy="0.4" r="0.7"><stop offset="0" stop-color="#fbe8c8"/><stop offset="1" stop-color="#e9c38e"/></radialGradient><radialGradient id="pin" cx="0.4" cy="0.35" r="0.7"><stop offset="0" stop-color="#ffffff"/><stop offset="0.6" stop-color="#e8e8e8"/><stop offset="1" stop-color="#9a9a9a"/></radialGradient><pattern id="hatch" width="2.9" height="2.9" patternUnits="userSpaceOnUse" patternTransform="rotate(45)"><rect width="2.9" height="2.9" fill="#fff"/><rect width="1.15" height="2.9" fill="#222"/></pattern></defs><rect x="405.5" y="247.5" width="268" height="265" fill="#fff" stroke="#111" stroke-width="1"/><path d="M381.6,354.3 L441.8,301.3" stroke="#111" stroke-width="1.1" fill="none"/><path d="M431.42,304.95 L441.8,301.3 L436.87,311.13" stroke="#111" stroke-width="1.1" fill="none"/><path d="M381.6,386.3 L441.5,385.8" stroke="#111" stroke-width="1.1" fill="none"/><path d="M431.27,381.76 L441.5,385.8 L431.34,390.01" stroke="#111" stroke-width="1.1" fill="none"/><path d="M381.6,417.2 L442,470.5" stroke="#111" stroke-width="1.1" fill="none"/><path d="M437.08,460.66 L442,470.5 L431.63,466.84" stroke="#111" stroke-width="1.1" fill="none"/><path d="M528,386.5 L578,386.5" stroke="#000" stroke-width="1.1" stroke-dasharray="3.6,2.6" fill="none"/><path d="M567.32,380.73 L578.2,385.8 L567.32,390.87" stroke="#111" stroke-width="1.1" fill="none"/><path fill-rule="evenodd" d="M437,355.3 H525.3 V417 H437 Z M442,360.3 H520.3 V412 H442 Z" fill="url(#hatch)"/><ellipse cx="481.1" cy="301.5" rx="39" ry="26" fill="url(#ucg)" stroke="#000" stroke-width="1.35"/><ellipse cx="481.1" cy="301.5" rx="37.5" ry="24.5" fill="none" stroke="#fff" stroke-width="0.8" opacity="0.7"/><ellipse cx="481" cy="385.8" rx="39" ry="25.8" fill="url(#ucg)" stroke="#000" stroke-width="1.35"/><ellipse cx="481" cy="385.8" rx="37.5" ry="24.3" fill="none" stroke="#fff" stroke-width="0.8" opacity="0.7"/><ellipse cx="617.8" cy="385.8" rx="39.4" ry="26" fill="url(#ucg)" stroke="#000" stroke-width="1.35"/><ellipse cx="617.8" cy="385.8" rx="37.9" ry="24.5" fill="none" stroke="#fff" stroke-width="0.8" opacity="0.7"/><ellipse cx="481" cy="470.5" rx="39" ry="26.2" fill="url(#ucg)" stroke="#000" stroke-width="1.35"/><ellipse cx="481" cy="470.5" rx="37.5" ry="24.7" fill="none" stroke="#fff" stroke-width="0.8" opacity="0.7"/><rect x="437.4" y="355.4" width="5.2" height="5.2" rx="0.8" fill="#fff" stroke="#000" stroke-width="1.2"/><rect x="477.9" y="355.4" width="5.2" height="5.2" rx="0.8" fill="#fff" stroke="#000" stroke-width="1.2"/><rect x="519.6" y="355.4" width="5.2" height="5.2" rx="0.8" fill="#fff" stroke="#000" stroke-width="1.2"/><rect x="437.4" y="383.4" width="5.2" height="5.2" rx="0.8" fill="#fff" stroke="#000" stroke-width="1.2"/><rect x="519.6" y="383.4" width="5.2" height="5.2" rx="0.8" fill="#fff" stroke="#000" stroke-width="1.2"/><rect x="437.4" y="411.4" width="5.2" height="5.2" rx="0.8" fill="#fff" stroke="#000" stroke-width="1.2"/><rect x="477.9" y="411.4" width="5.2" height="5.2" rx="0.8" fill="#fff" stroke="#000" stroke-width="1.2"/><rect x="519.6" y="411.4" width="5.2" height="5.2" rx="0.8" fill="#fff" stroke="#000" stroke-width="1.2"/><path d="M534,365 V358 M531.8,360.2 L534,357.5 L536.2,360.2" stroke="#111" stroke-width="1" fill="none"/><circle cx="533" cy="374" r="2.6" fill="none" stroke="#111" stroke-width="1"/><path d="M535,371.8 L537.5,369.2 M535.8,369.2 H537.5 V371" stroke="#111" stroke-width="0.9" fill="none"/><circle cx="533" cy="383" r="2.8" fill="none" stroke="#111" stroke-width="1"/><path d="M535,385 L537.6,387.6" stroke="#111" stroke-width="1.2"/><circle cx="344.5" cy="361.5" r="8" fill="url(#head)" stroke="#222" stroke-width="1"/><path d="M344.5,369.5 V386.3 M333.3,374.3 H356.8 M344.5,386.3 L336,401.2 M344.5,386.3 L353.6,401.2" stroke="#222" stroke-width="1" fill="none"/><rect x="747.5" y="152.5" width="103" height="139.5" rx="2" fill="#fdfde3" stroke="#222" stroke-width="1"/><circle cx="798.8" cy="155.2" r="6.2" fill="url(#pin)" stroke="#555" stroke-width="0.8"/></svg>
<div class="t" style="left:318.00px;top:145.13px;font-size:29px;line-height:29px;color:#000;font-weight:normal;transform:scaleX(0.9431);transform-origin:0 0;">Use Case Analysis</div>
<div class="t" style="left:508.00px;top:251.98px;font-size:9px;line-height:9px;color:#000;font-weight:normal;-webkit-text-stroke:0.1px #000;transform:scaleX(0.8836);transform-origin:0 0;">Online Bookstore</div>
<div class="t" style="left:446.00px;top:297.48px;font-size:9px;line-height:9px;color:#000;font-weight:bold;-webkit-text-stroke:0.1px #000;transform:scaleX(0.8481);transform-origin:0 0;">List Current Orders</div>
<div class="t" style="left:454.70px;top:381.78px;font-size:9px;line-height:9px;color:#000;font-weight:bold;-webkit-text-stroke:0.1px #000;transform:scaleX(0.8367);transform-origin:0 0;">Process Order</div>
<div class="t" style="left:590.30px;top:381.78px;font-size:9px;line-height:9px;color:#000;font-weight:bold;-webkit-text-stroke:0.1px #000;transform:scaleX(0.8736);transform-origin:0 0;">Package Order</div>
<div class="t" style="left:461.10px;top:466.48px;font-size:9px;line-height:9px;color:#000;font-weight:bold;-webkit-text-stroke:0.1px #000;transform:scaleX(0.8515);transform-origin:0 0;">Ship Order</div>
<div class="t" style="left:310.90px;top:402.78px;font-size:9px;line-height:9px;color:#000;font-weight:bold;-webkit-text-stroke:0.1px #000;transform:scaleX(0.8763);transform-origin:0 0;">Storeroom Worker</div>
<div class="t" style="left:335.26px;top:417.18px;font-size:9px;line-height:9px;color:#111;font-weight:normal;font-style:italic;-webkit-text-stroke:0.1px #111;transform:scaleX(0.8800);transform-origin:0 0;">(from</div>
<div class="t" style="left:331.96px;top:427.58px;font-size:9px;line-height:9px;color:#111;font-weight:normal;font-style:italic;-webkit-text-stroke:0.1px #111;transform:scaleX(0.8800);transform-origin:0 0;">Actors)</div>
<div class="t" style="left:532.60px;top:389.73px;font-size:8.5px;line-height:8.5px;color:#111;font-weight:normal;-webkit-text-stroke:0.1px #111;transform:scaleX(0.9179);transform-origin:0 0;">«include»</div>
<div class="t" style="left:750.60px;top:166.28px;font-size:9px;line-height:9px;color:#000;font-weight:normal;-webkit-text-stroke:0.12px #000;transform:scaleX(0.8550);transform-origin:0 0;">Use Case relationships can</div>
<div class="t" style="left:750.60px;top:176.58px;font-size:9px;line-height:9px;color:#000;font-weight:normal;-webkit-text-stroke:0.12px #000;transform:scaleX(0.8550);transform-origin:0 0;">be modeled using the</div>
<div class="t" style="left:750.60px;top:186.88px;font-size:9px;line-height:9px;color:#000;font-weight:normal;-webkit-text-stroke:0.12px #000;transform:scaleX(0.8550);transform-origin:0 0;">&lt;&lt;include&gt;&gt; relationship</div>
<div class="t" style="left:750.60px;top:197.18px;font-size:9px;line-height:9px;color:#000;font-weight:normal;-webkit-text-stroke:0.12px #000;transform:scaleX(0.8550);transform-origin:0 0;">which helps to factor out</div>
<div class="t" style="left:750.60px;top:207.48px;font-size:9px;line-height:9px;color:#000;font-weight:normal;-webkit-text-stroke:0.12px #000;transform:scaleX(0.8550);transform-origin:0 0;">common steps in a use</div>
<div class="t" style="left:750.60px;top:217.78px;font-size:9px;line-height:9px;color:#000;font-weight:normal;-webkit-text-stroke:0.12px #000;transform:scaleX(0.8550);transform-origin:0 0;">case. A Use Case is</div>
<div class="t" style="left:750.60px;top:228.08px;font-size:9px;line-height:9px;color:#000;font-weight:normal;-webkit-text-stroke:0.12px #000;transform:scaleX(0.8550);transform-origin:0 0;">typically included into a</div>
<div class="t" style="left:750.60px;top:238.38px;font-size:9px;line-height:9px;color:#000;font-weight:normal;-webkit-text-stroke:0.12px #000;transform:scaleX(0.8550);transform-origin:0 0;">number of base use case.</div>
<div class="t" style="left:750.60px;top:248.68px;font-size:9px;line-height:9px;color:#000;font-weight:normal;-webkit-text-stroke:0.12px #000;transform:scaleX(0.8550);transform-origin:0 0;">The relationship is</div>
<div class="t" style="left:750.60px;top:258.98px;font-size:9px;line-height:9px;color:#000;font-weight:normal;-webkit-text-stroke:0.12px #000;transform:scaleX(0.8550);transform-origin:0 0;">available from the tool box</div>
<div class="t" style="left:750.60px;top:269.28px;font-size:9px;line-height:9px;color:#000;font-weight:normal;-webkit-text-stroke:0.12px #000;transform:scaleX(0.8550);transform-origin:0 0;">page or from the Quick</div>
<div class="t" style="left:750.60px;top:279.58px;font-size:9px;line-height:9px;color:#000;font-weight:normal;-webkit-text-stroke:0.12px #000;transform:scaleX(0.8550);transform-origin:0 0;">Linker.</div>
</body></html>
